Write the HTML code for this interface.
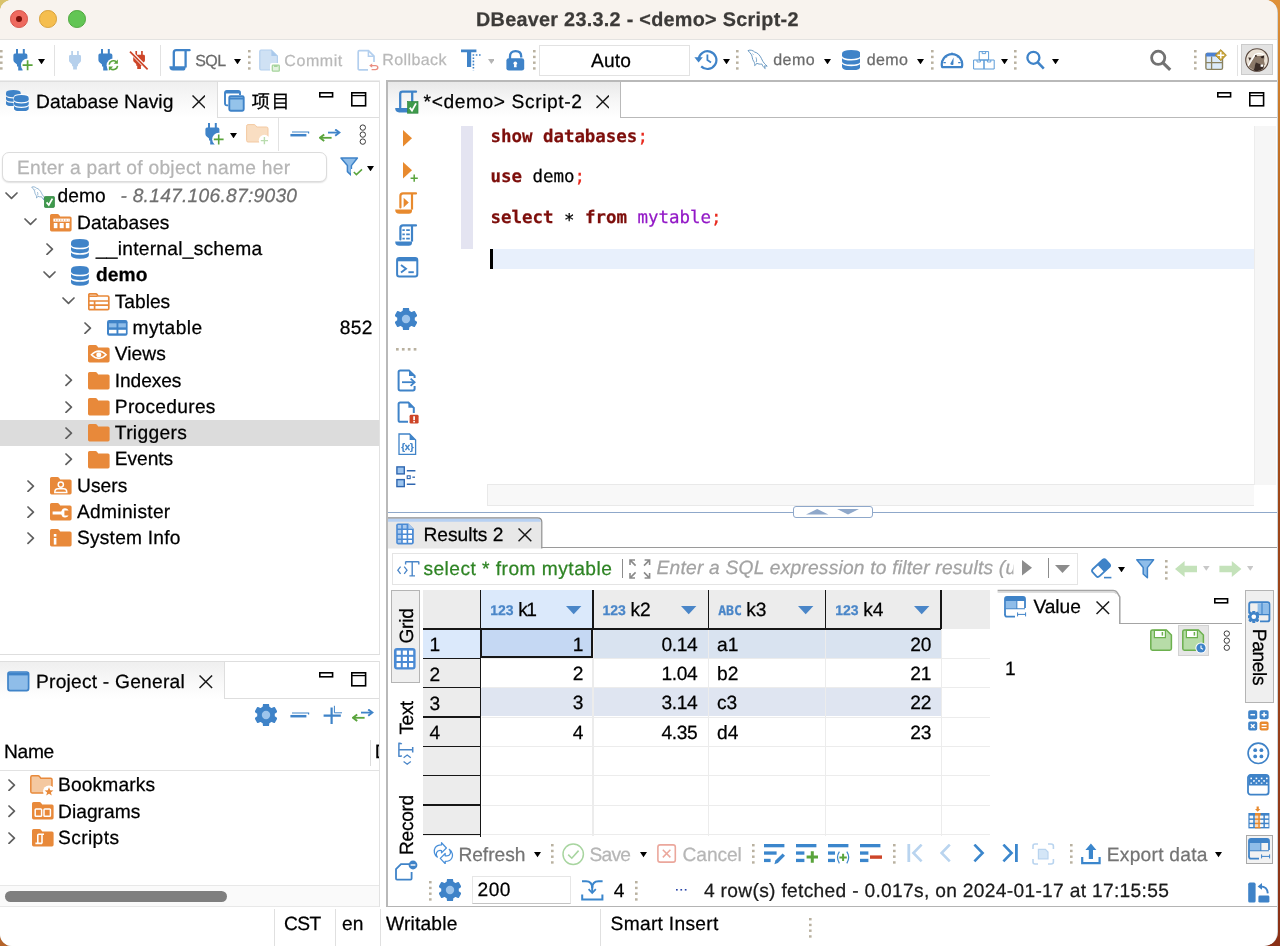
<!DOCTYPE html>
<html lang="en"><head><meta charset="utf-8"><title>DBeaver 23.3.2 - &lt;demo&gt; Script-2</title>
<style>
html,body{margin:0;padding:0;}
body{width:1280px;height:946px;overflow:hidden;position:relative;
 background:
  linear-gradient(180deg,#d9c26c 0,#d9c26c 40px,rgba(0,0,0,0) 41px) left top/40px 100% no-repeat,
  linear-gradient(180deg,rgba(0,0,0,0) 900px,#b5642a 901px) left top/40px 100% no-repeat,
  linear-gradient(180deg,#df9139 0%,#c97828 12%,#a04818 45%,#98401a 75%,#8a3016 100%);
 font-family:"Liberation Sans","Noto Sans CJK SC",sans-serif;}
#win{position:absolute;left:0;top:0;width:1277px;height:946px;background:#fff;border-radius:12px 12px 13px 12px;overflow:hidden;will-change:transform;}
.b{position:absolute;box-sizing:border-box;display:block;}
.t{position:absolute;white-space:pre;line-height:1em;color:#000;-webkit-text-stroke:0.25px;text-rendering:geometricPrecision;}
.m{font-family:"DejaVu Sans Mono","Liberation Mono",monospace;}
#winb{position:absolute;left:0;top:0;width:1278px;height:946px;background:#cfd5d8;border-radius:12px 13px 14px 12px;}

</style></head>
<body>
<div id="winb"></div>
<div id="win">
<div class="b" style="left:0px;top:0px;width:1277px;height:41px;background:#f8f3ee;border-bottom:2px solid #e4e3e1;"></div>
<div class="b" style="left:10.2px;top:10.1px;width:17.6px;height:17.6px;background:#ee6a5f;border-radius:50%;border:0.6px solid #d5544a;"></div>
<div class="b" style="left:39.2px;top:10.1px;width:17.6px;height:17.6px;background:#f5be4f;border-radius:50%;border:0.6px solid #d8a13b;"></div>
<div class="b" style="left:68.2px;top:10.1px;width:17.6px;height:17.6px;background:#62c554;border-radius:50%;border:0.6px solid #4fa73f;"></div>
<div class="b" style="left:16.1px;top:16px;width:5.8px;height:5.8px;background:#7a100a;border-radius:50%;"></div>
<span class="t" style="top:11px;font-size:19.8px;left:476.00px;letter-spacing:0.292px;color:#3c3a38;font-weight:700;">DBeaver 23.3.2 - &lt;demo&gt; Script-2</span>
<div class="b" style="left:0px;top:40px;width:1277px;height:40px;background:#fff;"></div>
<div class="b" style="left:0px;top:80px;width:380px;height:1px;background:#ededed;"></div>
<div class="b" style="left:0px;top:81px;width:380px;height:1px;background:#dedede;"></div>
<div class="b" style="left:379px;top:81px;width:1px;height:574px;background:#e2e2e2;"></div>
<div class="b" style="left:0px;top:654px;width:380px;height:1px;background:#dedede;"></div>
<div class="b" style="left:0px;top:661px;width:380px;height:1px;background:#dedede;"></div>
<div class="b" style="left:379px;top:661px;width:1px;height:246px;background:#e2e2e2;"></div>
<div class="b" style="left:386px;top:80px;width:891px;height:2px;background:#b9b9b9;"></div>
<div class="b" style="left:386px;top:80px;width:1.7px;height:827px;background:#b9b9b9;"></div>
<div class="b" style="left:386px;top:906.2px;width:891px;height:1.3px;background:#b4b4b4;"></div>
<div class="b" style="left:274px;top:909px;width:1px;height:37px;background:#e0e0e0;"></div>
<div class="b" style="left:335px;top:909px;width:1px;height:37px;background:#e0e0e0;"></div>
<div class="b" style="left:380px;top:909px;width:1px;height:37px;background:#e0e0e0;"></div>
<div class="b" style="left:600px;top:909px;width:1px;height:37px;background:#e0e0e0;"></div>
<svg class="b" style="left:0px;top:50.2px;" width="3" height="24" viewBox="0 0 3 24"><rect x="0" y="0.00" width="2.6" height="2.4" fill="#b9b1a0"/><rect x="0" y="5.75" width="2.6" height="2.4" fill="#b9b1a0"/><rect x="0" y="11.50" width="2.6" height="2.4" fill="#b9b1a0"/><rect x="0" y="17.25" width="2.6" height="2.4" fill="#b9b1a0"/></svg>
<svg class="b" style="left:12.6px;top:49px;" width="21" height="23" viewBox="0 0 21 23"><path d="M2.60 0.00H4.60V4.60H9.40V0H11.40V4.60H12.40Q14.00 4.60 14.00 6.20V11.00Q14.00 12.30 13.00 13.20L10.40 15.60V17.60H9.20V21.50H4.80V17.60H3.60V15.60L1.00 13.20Q0.00 12.30 0.00 11.00V6.20Q0.00 4.60 1.60 4.60H2.60Z" fill="#3f83c8" transform="translate(0.4,0)"/><circle cx="14.6" cy="16.2" r="6.6" fill="#fff"/><path d="M9.6 16.2H19.6M14.6 11.2V21.2" stroke="#5aa43c" stroke-width="1.7" fill="none"/></svg>
<svg class="b" style="left:38.3px;top:58.5px;" width="7" height="5.3" viewBox="0 0 7 5.3"><path d="M0 0H7L3.5 5.3Z" fill="#000"/></svg>
<div class="b" style="left:54px;top:45px;width:1px;height:31px;background:#e2e2e2;"></div>
<svg class="b" style="left:69px;top:50.6px;" width="13" height="19" viewBox="0 0 13 19"><path d="M2.24 0.00H3.96V3.96H8.08V0H9.80V3.96H10.66Q12.04 3.96 12.04 5.33V9.46Q12.04 10.58 11.18 11.35L8.94 13.42V15.14H7.91V18.49H4.13V15.14H3.10V13.42L0.86 11.35Q0.00 10.58 0.00 9.46V5.33Q0.00 3.96 1.38 3.96H2.24Z" fill="#b6d0ec"/></svg>
<svg class="b" style="left:97.6px;top:49px;" width="22" height="23" viewBox="0 0 22 23"><path d="M2.60 0.00H4.60V4.60H9.40V0H11.40V4.60H12.40Q14.00 4.60 14.00 6.20V11.00Q14.00 12.30 13.00 13.20L10.40 15.60V17.60H9.20V21.50H4.80V17.60H3.60V15.60L1.00 13.20Q0.00 12.30 0.00 11.00V6.20Q0.00 4.60 1.60 4.60H2.60Z" fill="#3f83c8" transform="translate(0.4,0)"/><circle cx="15.4" cy="16.2" r="6.8" fill="#fff"/><path d="M11.2 15.6A4.4 4.4 0 0 1 18.4 12.8" stroke="#5aa43c" stroke-width="1.6" fill="none"/><path d="M19.9 10.6V14.8H15.7Z" fill="#5aa43c"/><path d="M19.6 16.8A4.4 4.4 0 0 1 12.4 19.6" stroke="#5aa43c" stroke-width="1.6" fill="none"/><path d="M10.9 21.8V17.6H15.1Z" fill="#5aa43c"/></svg>
<svg class="b" style="left:128.5px;top:50px;" width="20" height="21" viewBox="0 0 20 21"><path d="M2.18 0.00H3.86V3.86H7.90V0H9.58V3.86H10.42Q11.76 3.86 11.76 5.21V9.24Q11.76 10.33 10.92 11.09L8.74 13.10V14.78H7.73V18.06H4.03V14.78H3.02V13.10L0.84 11.09Q0.00 10.33 0.00 9.24V5.21Q0.00 3.86 1.34 3.86H2.18Z" fill="#cd4528" transform="translate(4.2,1)"/><path d="M2.2 2.6L18 18.6" stroke="#fff" stroke-width="3.6"/><path d="M1 1.6L18.6 19.4" stroke="#cd4528" stroke-width="1.7"/></svg>
<div class="b" style="left:160px;top:45px;width:1px;height:31px;background:#e2e2e2;"></div>
<svg class="b" style="left:169.4px;top:49px;" width="22" height="22" viewBox="0 0 22 22"><path d="M20.6 1.2H7.2Q4.8 1.2 4.8 3.6V17.4" stroke="#3f83c8" stroke-width="2.3" fill="none" stroke-linecap="round"/><path d="M16.6 1.6V18.6" stroke="#3f83c8" stroke-width="2.3" fill="none"/><path d="M0.4 17.2H16.6V18.4Q16.6 21.6 13.4 21.6H4Q0.4 21.6 0.4 17.2Z" fill="#3f83c8"/></svg>
<span class="t" style="top:54px;font-size:16.0px;left:195.20px;letter-spacing:-0.505px;color:#6b6b6b;">SQL</span>
<svg class="b" style="left:234.4px;top:58.5px;" width="7" height="5.3" viewBox="0 0 7 5.3"><path d="M0 0H7L3.5 5.3Z" fill="#000"/></svg>
<svg class="b" style="left:247.5px;top:50.2px;" width="3" height="24" viewBox="0 0 3 24"><rect x="0" y="0.00" width="2.6" height="2.4" fill="#b9b1a0"/><rect x="0" y="5.75" width="2.6" height="2.4" fill="#b9b1a0"/><rect x="0" y="11.50" width="2.6" height="2.4" fill="#b9b1a0"/><rect x="0" y="17.25" width="2.6" height="2.4" fill="#b9b1a0"/></svg>
<svg class="b" style="left:258.6px;top:48.6px;" width="22" height="23" viewBox="0 0 22 23"><path d="M2 1H12.4L18.4 7V19.6Q18.4 21 17 21H2Q0.8 21 0.8 19.6V2.4Q0.8 1 2 1Z" fill="#cfe1f4" stroke="#b3cfee" stroke-width="1.2"/><path d="M12.4 1V7H18.4Z" fill="#a9c9ec"/><rect x="11" y="14" width="11" height="9" rx="2" fill="#fff"/><rect x="13.3" y="16.2" width="7" height="6" rx="0.8" fill="#e3f2df" stroke="#a6d49d" stroke-width="1.3"/><rect x="15" y="16" width="3.6" height="2" fill="#a6d49d"/></svg>
<span class="t" style="top:54px;font-size:16.0px;left:284.30px;letter-spacing:0.565px;color:#b9b9b9;">Commit</span>
<svg class="b" style="left:357.4px;top:48.8px;" width="22" height="23" viewBox="0 0 22 23"><path d="M2.4 1.6H11.4L17 7.2V19.4Q17 20.8 15.6 20.8H2.4Q1.2 20.8 1.2 19.4V3Q1.2 1.6 2.4 1.6Z" fill="#fff" stroke="#b3cfee" stroke-width="1.7"/><path d="M11.4 1.6V7.2H17" fill="none" stroke="#b3cfee" stroke-width="1.5"/><rect x="11" y="13" width="11" height="10" fill="#fff"/><path d="M13.4 16.6H18.4Q20.8 16.6 20.8 18.6Q20.8 20.6 18.4 20.6H14.6" fill="none" stroke="#ea8e82" stroke-width="1.4"/><path d="M12.2 16.6L15.2 14.4V18.8Z" fill="#ea8e82"/></svg>
<span class="t" style="top:53px;font-size:16.0px;left:382.30px;letter-spacing:0.393px;color:#b9b9b9;">Rollback</span>
<svg class="b" style="left:461px;top:49px;" width="22" height="22" viewBox="0 0 22 22"><path d="M0 0.4H15.4V3.2H0Z M6 3.2H10.2V18H6Z" fill="#3f83c8"/><path d="M11.6 6H21" stroke="#3f83c8" stroke-width="1.6" stroke-dasharray="1.6 1.6"/><path d="M12.4 8.4V21.4" stroke="#3f83c8" stroke-width="1.6" stroke-dasharray="1.6 1.6"/></svg>
<svg class="b" style="left:487.6px;top:58.8px;" width="6.8" height="5" viewBox="0 0 6.8 5"><path d="M0 0H6.8L3.4 5Z" fill="#b4b4b4"/></svg>
<svg class="b" style="left:505.6px;top:49px;" width="19" height="22" viewBox="0 0 19 22"><path d="M4 10V7.4Q4 2.2 9.6 2.2Q15.2 2.2 15.2 7.4V8.6" fill="none" stroke="#3f83c8" stroke-width="2.3"/><rect x="0.4" y="9.2" width="17.8" height="12.4" rx="2.4" fill="#3f83c8"/><circle cx="9.3" cy="14.2" r="1.8" fill="#fff"/><path d="M8.3 14.6H10.3L10.7 18.2H7.9Z" fill="#fff"/></svg>
<svg class="b" style="left:533px;top:50.2px;" width="3" height="24" viewBox="0 0 3 24"><rect x="0" y="0.00" width="2.6" height="2.4" fill="#b9b1a0"/><rect x="0" y="5.75" width="2.6" height="2.4" fill="#b9b1a0"/><rect x="0" y="11.50" width="2.6" height="2.4" fill="#b9b1a0"/><rect x="0" y="17.25" width="2.6" height="2.4" fill="#b9b1a0"/></svg>
<div class="b" style="left:539px;top:44.5px;width:151px;height:31.5px;background:#fff;border:1px solid #e2e2e2;"></div>
<span class="t" style="top:52px;font-size:19.2px;left:591.00px;letter-spacing:0.126px;">Auto</span>
<svg class="b" style="left:694px;top:49px;" width="24" height="22" viewBox="0 0 24 22"><path d="M4.6 10.6A8.9 8.9 0 1 1 7.2 17.4" fill="none" stroke="#3f83c8" stroke-width="2.2"/><path d="M0.4 8.2H8.8L4.6 13.6Z" fill="#3f83c8"/><path d="M13.4 5.6V11L17 13.4" fill="none" stroke="#3f83c8" stroke-width="1.8"/></svg>
<svg class="b" style="left:722.8px;top:58.5px;" width="7" height="5.3" viewBox="0 0 7 5.3"><path d="M0 0H7L3.5 5.3Z" fill="#000"/></svg>
<svg class="b" style="left:736.3px;top:50.2px;" width="3" height="24" viewBox="0 0 3 24"><rect x="0" y="0.00" width="2.6" height="2.4" fill="#b9b1a0"/><rect x="0" y="5.75" width="2.6" height="2.4" fill="#b9b1a0"/><rect x="0" y="11.50" width="2.6" height="2.4" fill="#b9b1a0"/><rect x="0" y="17.25" width="2.6" height="2.4" fill="#b9b1a0"/></svg>
<svg class="b" style="left:746.6px;top:49.4px;" width="21.0" height="21.0" viewBox="0 0 21.0 21.0"><g transform="scale(1.0)"><path d="M1 1.6C3.4 0.4 6.2 1.6 7.6 3C10.6 3.6 13 6.4 14.4 9.4C15.4 11.6 16.4 13.8 18.6 15.6L20.2 17.2L17.6 16.8L18.2 19.6C16.6 18.4 15.4 16.6 14.8 15C13 15.4 11.2 15 9.8 14.2C9.4 15.4 8.2 16.4 7.6 16.6C8 15 7.6 13.6 6.6 12.2C5 10 5.6 7.8 4.4 5.6C3.6 4.2 2 3 1 1.6Z" fill="#fff" stroke="#5b8fbb" stroke-width="0.9" stroke-linejoin="round"/><path d="M5.4 4.6L6.4 5.6M9 8.4C9.6 10 9.8 11.6 9.2 13" fill="none" stroke="#5b8fbb" stroke-width="0.8"/></g></svg>
<span class="t" style="top:53px;font-size:16.0px;left:773.20px;letter-spacing:0.494px;color:#6b6b6b;">demo</span>
<svg class="b" style="left:823.8px;top:58.5px;" width="7" height="5.3" viewBox="0 0 7 5.3"><path d="M0 0H7L3.5 5.3Z" fill="#000"/></svg>
<svg class="b" style="left:841.5px;top:49.5px;" width="18.9" height="20.9" viewBox="0 0 18.9 20.9"><g transform="scale(1.0)"><path d="M0 3.6Q0 0 9.2 0Q18.4 0 18.4 3.6V5.6Q18.4 9 9.2 9Q0 9 0 5.6Z" fill="#3f83c8"/><path d="M0 8.2Q2 10.6 9.2 10.6Q16.4 10.6 18.4 8.2V11.2Q18.4 14.6 9.2 14.6Q0 14.6 0 11.2Z" fill="#3f83c8"/><path d="M0 13.8Q2 16.2 9.2 16.2Q16.4 16.2 18.4 13.8V16.8Q18.4 20.4 9.2 20.4Q0 20.4 0 16.8Z" fill="#3f83c8"/></g></svg>
<span class="t" style="top:53px;font-size:16.0px;left:866.80px;letter-spacing:0.369px;color:#6b6b6b;">demo</span>
<svg class="b" style="left:917.2px;top:58.5px;" width="7" height="5.3" viewBox="0 0 7 5.3"><path d="M0 0H7L3.5 5.3Z" fill="#000"/></svg>
<svg class="b" style="left:930.6px;top:50.2px;" width="3" height="24" viewBox="0 0 3 24"><rect x="0" y="0.00" width="2.6" height="2.4" fill="#b9b1a0"/><rect x="0" y="5.75" width="2.6" height="2.4" fill="#b9b1a0"/><rect x="0" y="11.50" width="2.6" height="2.4" fill="#b9b1a0"/><rect x="0" y="17.25" width="2.6" height="2.4" fill="#b9b1a0"/></svg>
<svg class="b" style="left:940.2px;top:49.2px;" width="24" height="20" viewBox="0 0 24 20"><path d="M2.2 18.2A10.2 10.2 0 1 1 21.8 18.2Z" fill="none" stroke="#3f83c8" stroke-width="2.2" stroke-linejoin="round"/><path d="M12 3.6V6M5.4 6.8L7 8.4M18.6 6.8L17 8.4M3.4 13.6H5.8M20.6 13.6H18.2" stroke="#3f83c8" stroke-width="1.2"/><path d="M10.2 15L13.6 8.4L13.4 15.4Q12 16.6 10.2 15Z" fill="#3f83c8"/></svg>
<svg class="b" style="left:973.2px;top:51.2px;" width="22" height="19" viewBox="0 0 22 19"><path d="M6.2 0.6H15.6V9H6.2Z M0.6 9H11V18H0.6Z M11 9H21.2V18H11Z" fill="#fff" stroke="#5b9bd8" stroke-width="1"/><path d="M9.2 0.6V2.6H12.6V0.6M4 9V11H7.4V9M14.4 9V11H17.8V9" fill="none" stroke="#5b9bd8" stroke-width="0.9"/></svg>
<svg class="b" style="left:1000.8px;top:58.5px;" width="7" height="5.3" viewBox="0 0 7 5.3"><path d="M0 0H7L3.5 5.3Z" fill="#000"/></svg>
<svg class="b" style="left:1013.8px;top:50.2px;" width="3" height="24" viewBox="0 0 3 24"><rect x="0" y="0.00" width="2.6" height="2.4" fill="#b9b1a0"/><rect x="0" y="5.75" width="2.6" height="2.4" fill="#b9b1a0"/><rect x="0" y="11.50" width="2.6" height="2.4" fill="#b9b1a0"/><rect x="0" y="17.25" width="2.6" height="2.4" fill="#b9b1a0"/></svg>
<svg class="b" style="left:1025px;top:49.6px;" width="22" height="22" viewBox="0 0 22 22"><circle cx="8.4" cy="7.8" r="6" fill="none" stroke="#3f83c8" stroke-width="2.3"/><path d="M12.6 12.2L18.8 18.6" stroke="#3f83c8" stroke-width="2.6"/></svg>
<svg class="b" style="left:1051.6px;top:58.5px;" width="7" height="5.3" viewBox="0 0 7 5.3"><path d="M0 0H7L3.5 5.3Z" fill="#000"/></svg>
<svg class="b" style="left:1148.6px;top:48.8px;" width="25" height="24" viewBox="0 0 25 24"><circle cx="9.2" cy="8.8" r="6.6" fill="none" stroke="#727272" stroke-width="2.8"/><path d="M13.8 13.6L21.2 20.8" stroke="#727272" stroke-width="3.2"/></svg>
<svg class="b" style="left:1194px;top:50.3px;" width="3" height="24" viewBox="0 0 3 24"><rect x="0" y="0.00" width="2.6" height="2.4" fill="#b9b1a0"/><rect x="0" y="5.75" width="2.6" height="2.4" fill="#b9b1a0"/><rect x="0" y="11.50" width="2.6" height="2.4" fill="#b9b1a0"/><rect x="0" y="17.25" width="2.6" height="2.4" fill="#b9b1a0"/></svg>
<svg class="b" style="left:1205px;top:48.6px;" width="23" height="22" viewBox="0 0 23 22"><rect x="0.9" y="4.4" width="16.6" height="16" rx="1.4" fill="#dcebfa" stroke="#8a8260" stroke-width="1.4"/><path d="M1 5.2Q1 3.8 2.4 3.8H12V7.4H1Z" fill="#4d82d2"/><path d="M6.6 7.4V20.4M1 13.6H17.4" stroke="#8a8260" stroke-width="1.3"/><path d="M15.8 0.6L21.4 6.2L15.8 11.8L10.2 6.2Z" fill="#c9a437" stroke="#a8862a" stroke-width="0.8"/><path d="M15.8 2.8V9.6M12.4 6.2H19.2" stroke="#fff" stroke-width="1.5"/></svg>
<div class="b" style="left:1236.5px;top:44.5px;width:1px;height:31px;background:#e2e2e2;"></div>
<div class="b" style="left:1240.6px;top:44.3px;width:32px;height:31.2px;background:#e3e3e3;border:1px solid #cbcbcb;"></div>
<svg class="b" style="left:1244.6px;top:47.7px;" width="24" height="24" viewBox="0 0 24 24"><circle cx="12" cy="12" r="11.3" fill="#e9e0d4" stroke="#5b4a40" stroke-width="1.1"/><path d="M9.6 7.4Q13.6 4.4 19.4 8L19.6 6.4Q14 3 9 6.2Z" fill="#fff"/><path d="M3.4 18L10 7.8L11 7.2L12 8L16 8L19.2 7.6L19.4 10L19 13L19.9 16.6L18.6 17.9L10.6 14.6L9 22.2Q5.4 20.8 3.4 18Z" fill="#8b7969"/><path d="M10.6 14.3L19 17.8L18.4 20.6Q15.4 23 12 23.2Q10 23 8.8 22.2Z" fill="#3b2d27"/><circle cx="10.9" cy="7.9" r="0.85" fill="#2e221e"/><path d="M15.4 8.8L19.3 7.5L18.5 10.2L16.8 10.2Z" fill="#2e221e"/><rect x="15.6" y="16.5" width="2.5" height="2.3" fill="#fff"/><path d="M3.2 17.8L9.6 7.2" stroke="#fff" stroke-width="1.4"/><path d="M3.3 9.4L6.3 9.7L4.7 12.8Z" fill="#3b2d27"/></svg>
<div class="b" style="left:0px;top:82px;width:217px;height:36px;background:linear-gradient(180deg,#efefef 0%,#f7f7f7 45%,#fff 100%);"></div>
<div class="b" style="left:217px;top:82px;width:162px;height:36px;background:#fff;border-left:1px solid #dedede;border-bottom:1px solid #dedede;"></div>
<svg class="b" style="left:6.2px;top:89.6px;" width="15.2" height="16.8" viewBox="0 0 15.2 16.8"><g transform="scale(0.8)"><path d="M0 3.6Q0 0 9.2 0Q18.4 0 18.4 3.6V5.6Q18.4 9 9.2 9Q0 9 0 5.6Z" fill="#3f83c8"/><path d="M0 8.2Q2 10.6 9.2 10.6Q16.4 10.6 18.4 8.2V11.2Q18.4 14.6 9.2 14.6Q0 14.6 0 11.2Z" fill="#3f83c8"/><path d="M0 13.8Q2 16.2 9.2 16.2Q16.4 16.2 18.4 13.8V16.8Q18.4 20.4 9.2 20.4Q0 20.4 0 16.8Z" fill="#3f83c8"/></g></svg>
<svg class="b" style="left:12.6px;top:93.6px;" width="17" height="19" viewBox="0 0 17 19"><path d="M0.6 3Q0.6 0 8.4 0Q16.4 0 16.4 3V15Q16.4 18.4 8.4 18.4Q0.6 18.4 0.6 15Z" fill="#fff"/></svg>
<svg class="b" style="left:13.8px;top:94.6px;" width="15.2" height="16.8" viewBox="0 0 15.2 16.8"><g transform="scale(0.8)"><path d="M0 3.6Q0 0 9.2 0Q18.4 0 18.4 3.6V5.6Q18.4 9 9.2 9Q0 9 0 5.6Z" fill="#3f83c8"/><path d="M0 8.2Q2 10.6 9.2 10.6Q16.4 10.6 18.4 8.2V11.2Q18.4 14.6 9.2 14.6Q0 14.6 0 11.2Z" fill="#3f83c8"/><path d="M0 13.8Q2 16.2 9.2 16.2Q16.4 16.2 18.4 13.8V16.8Q18.4 20.4 9.2 20.4Q0 20.4 0 16.8Z" fill="#3f83c8"/></g></svg>
<span class="t" style="top:93px;font-size:19.2px;left:36.00px;letter-spacing:0.063px;">Database Navig</span>
<svg class="b" style="left:191.6px;top:95.2px;" width="13.6" height="13.6" viewBox="0 0 13.6 13.6"><path d="M0.5 0.5L13.1 13.1M13.1 0.5L0.5 13.1" stroke="#1a1a1a" stroke-width="1.5" fill="none"/></svg>
<svg class="b" style="left:223.6px;top:89.6px;" width="21" height="22" viewBox="0 0 21 22"><rect x="1" y="1" width="15" height="14.4" rx="1.8" fill="#fff" stroke="#3f83c8" stroke-width="1.9"/><path d="M1 2.2H16" stroke="#3f83c8" stroke-width="2.4"/><rect x="4.2" y="5" width="16" height="16.2" rx="1.8" fill="#fff"/><rect x="5.3" y="6.1" width="14.4" height="14.6" rx="1.4" fill="#94c3ea" stroke="#3f83c8" stroke-width="1.9"/><path d="M5.2 8.4H19.8" stroke="#3f83c8" stroke-width="2"/></svg>
<span class="t" style="top:93px;font-size:18.4px;left:251.60px;letter-spacing:1.2px;">项目</span>
<svg class="b" style="left:319px;top:92px;" width="15.4" height="6.6" viewBox="0 0 15.4 6.6"><rect x="0.8" y="0.8" width="12.8" height="3.9999999999999996" fill="#fff" stroke="#000" stroke-width="1.6"/></svg>
<svg class="b" style="left:350.6px;top:92px;" width="16.4" height="15.6" viewBox="0 0 16.4 15.6"><rect x="0.8" y="0.8" width="13.8" height="13.0" fill="#fff" stroke="#000" stroke-width="1.6"/><path d="M0.8 3.6H14.6" stroke="#000" stroke-width="1.3"/></svg>
<svg class="b" style="left:204.6px;top:123.4px;" width="21" height="23" viewBox="0 0 21 23"><path d="M2.60 0.00H4.60V4.60H9.40V0H11.40V4.60H12.40Q14.00 4.60 14.00 6.20V11.00Q14.00 12.30 13.00 13.20L10.40 15.60V17.60H9.20V21.50H4.80V17.60H3.60V15.60L1.00 13.20Q0.00 12.30 0.00 11.00V6.20Q0.00 4.60 1.60 4.60H2.60Z" fill="#3f83c8" transform="translate(0.4,0)"/><circle cx="13.6" cy="16.2" r="6.4" fill="#fff"/><path d="M8.8 16.4H18.6M13.7 11.4V21.4" stroke="#5aa43c" stroke-width="1.6" fill="none"/></svg>
<svg class="b" style="left:230px;top:133.2px;" width="7" height="5.3" viewBox="0 0 7 5.3"><path d="M0 0H7L3.5 5.3Z" fill="#000"/></svg>
<svg class="b" style="left:246px;top:124.4px;" width="24" height="21" viewBox="0 0 24 21"><path d="M2 0.6H8Q9 0.6 9.6 1.4L10.8 3H20.4Q22 3 22 4.6V16.4Q22 18 20.4 18H2Q0.6 18 0.6 16.4V2.2Q0.6 0.6 2 0.6Z" fill="#f9dec2" stroke="#f3c9a2" stroke-width="1"/><circle cx="18.4" cy="16.4" r="5.6" fill="#fff"/><path d="M14.8 16.6H22M18.4 13V20.2" stroke="#b9dcae" stroke-width="1.4"/></svg>
<div class="b" style="left:278px;top:118px;width:1px;height:33px;background:#e2e2e2;"></div>
<svg class="b" style="left:289.8px;top:130.6px;" width="20" height="7" viewBox="0 0 20 7"><path d="M2 1H18.6V2.6" stroke="#3f83c8" stroke-width="1.2" fill="none"/><path d="M0.4 4.2H16.4" stroke="#3f83c8" stroke-width="2.5"/></svg>
<svg class="b" style="left:319.2px;top:128.6px;" width="22" height="13" viewBox="0 0 22 13"><path d="M9 3.6H19" stroke="#3f83c8" stroke-width="1.8"/><path d="M16.2 0.4L20.4 3.6L16.2 6.8" fill="none" stroke="#3f83c8" stroke-width="1.9"/><path d="M2 8.8H12.6" stroke="#5aa43c" stroke-width="1.8"/><path d="M5.2 5.6L1 8.8L5.2 12" fill="none" stroke="#5aa43c" stroke-width="1.9"/></svg>
<svg class="b" style="left:359.4px;top:124.4px;" width="8" height="22" viewBox="0 0 8 22"><circle cx="3.8" cy="3.6" r="2.7" fill="#fff" stroke="#3a3a3a" stroke-width="1"/><circle cx="3.8" cy="10.6" r="2.7" fill="#fff" stroke="#3a3a3a" stroke-width="1"/><circle cx="3.8" cy="17.6" r="2.7" fill="#fff" stroke="#3a3a3a" stroke-width="1"/></svg>
<div class="b" style="left:1.5px;top:151.5px;width:325px;height:30px;background:#fff;border:1px solid #dcdcdc;border-radius:7px;box-shadow:0 1px 1.5px rgba(0,0,0,0.12);"></div>
<span class="t" style="top:159px;font-size:19.2px;left:17.00px;letter-spacing:0.284px;color:#b5b5b5;">Enter a part of object name her</span>
<svg class="b" style="left:339.6px;top:156.6px;" width="24" height="20" viewBox="0 0 24 20"><path d="M1 1H17.4L11.4 8.6V18.4L7.4 14.6V8.6Z" fill="#8fbde9" stroke="#3f83c8" stroke-width="1.5" stroke-linejoin="round"/><path d="M11 12H24V20H11Z" fill="#fff"/><path d="M13.8 15L16.4 17.6L22 12.4" fill="none" stroke="#5aa43c" stroke-width="1.5"/></svg>
<svg class="b" style="left:367.2px;top:165.6px;" width="7" height="5.3" viewBox="0 0 7 5.3"><path d="M0 0H7L3.5 5.3Z" fill="#000"/></svg>
<div class="b" style="left:0px;top:420.2px;width:379px;height:25.4px;background:#dcdcdc;"></div>
<svg class="b" style="left:4.9px;top:191.9px;" width="13" height="8.2" viewBox="0 0 13 8.2"><path d="M1 1L6.5 6.4L12 1" fill="none" stroke="#5f5f5f" stroke-width="1.7" stroke-linecap="round" stroke-linejoin="round"/></svg>
<svg class="b" style="left:31.2px;top:185.8px;" width="15.1" height="15.1" viewBox="0 0 15.1 15.1"><g transform="scale(0.72)"><path d="M1 1.6C3.4 0.4 6.2 1.6 7.6 3C10.6 3.6 13 6.4 14.4 9.4C15.4 11.6 16.4 13.8 18.6 15.6L20.2 17.2L17.6 16.8L18.2 19.6C16.6 18.4 15.4 16.6 14.8 15C13 15.4 11.2 15 9.8 14.2C9.4 15.4 8.2 16.4 7.6 16.6C8 15 7.6 13.6 6.6 12.2C5 10 5.6 7.8 4.4 5.6C3.6 4.2 2 3 1 1.6Z" fill="#fff" stroke="#5b8fbb" stroke-width="0.9" stroke-linejoin="round"/><path d="M5.4 4.6L6.4 5.6M9 8.4C9.6 10 9.8 11.6 9.2 13" fill="none" stroke="#5b8fbb" stroke-width="0.8"/></g></svg>
<svg class="b" style="left:43.6px;top:196.2px;" width="11" height="12" viewBox="0 0 11 12"><rect x="0.4" y="0.4" width="10" height="11" rx="1" fill="#3f9a4c" stroke="#2f8540" stroke-width="0.8"/><path d="M2.6 6.4L4.8 9L8.4 2.6" fill="none" stroke="#fff" stroke-width="1.7"/></svg>
<span class="t" style="top:187px;font-size:19.2px;left:57.60px;letter-spacing:0.043px;">demo</span>
<span class="t" style="top:187px;font-size:19.2px;left:120.40px;letter-spacing:0.269px;color:#6f6f6f;font-style:italic;">- 8.147.106.87:9030</span>
<svg class="b" style="left:23.799999999999997px;top:218.23px;" width="13" height="8.2" viewBox="0 0 13 8.2"><path d="M1 1L6.5 6.4L12 1" fill="none" stroke="#5f5f5f" stroke-width="1.7" stroke-linecap="round" stroke-linejoin="round"/></svg>
<span class="t" style="top:214px;font-size:19.2px;left:77.00px;letter-spacing:0.068px;">Databases</span>
<svg class="b" style="left:50.4px;top:213.52999999999997px;" width="22" height="18" viewBox="0 0 22 18"><path d="M1.6 0H7.4Q8.4 0 9 0.8L10.2 2.4H20Q21.6 2.4 21.6 4V15.8Q21.6 17.4 20 17.4H1.6Q0 17.4 0 15.8V1.6Q0 0 1.6 0Z" fill="#e8893a"/><rect x="3.4" y="4.6" width="16.4" height="3" fill="#fff"/><path d="M5 6.1H18.4" stroke="#e8893a" stroke-width="1" stroke-dasharray="1.2 1.4"/><rect x="3.8" y="9" width="3.6" height="5.2" fill="#fff"/><rect x="9.7" y="9" width="4" height="5.2" fill="#fff"/><rect x="15.8" y="9" width="3.6" height="5.2" fill="#fff"/></svg>
<svg class="b" style="left:45.699999999999996px;top:242.56px;" width="8.2" height="12.4" viewBox="0 0 8.2 12.4"><path d="M1 1L6.4 6.2L1 11.4" fill="none" stroke="#5f5f5f" stroke-width="1.7" stroke-linecap="round" stroke-linejoin="round"/></svg>
<span class="t" style="top:240px;font-size:19.2px;left:95.90px;letter-spacing:0.257px;">__internal_schema</span>
<svg class="b" style="left:70.5px;top:239.35999999999999px;" width="18.3" height="20.3" viewBox="0 0 18.3 20.3"><g transform="scale(0.97)"><path d="M0 3.6Q0 0 9.2 0Q18.4 0 18.4 3.6V5.6Q18.4 9 9.2 9Q0 9 0 5.6Z" fill="#3f83c8"/><path d="M0 8.2Q2 10.6 9.2 10.6Q16.4 10.6 18.4 8.2V11.2Q18.4 14.6 9.2 14.6Q0 14.6 0 11.2Z" fill="#3f83c8"/><path d="M0 13.8Q2 16.2 9.2 16.2Q16.4 16.2 18.4 13.8V16.8Q18.4 20.4 9.2 20.4Q0 20.4 0 16.8Z" fill="#3f83c8"/></g></svg>
<svg class="b" style="left:42.699999999999996px;top:270.89px;" width="13" height="8.2" viewBox="0 0 13 8.2"><path d="M1 1L6.5 6.4L12 1" fill="none" stroke="#5f5f5f" stroke-width="1.7" stroke-linecap="round" stroke-linejoin="round"/></svg>
<span class="t" style="top:266px;font-size:19.2px;left:95.90px;letter-spacing:0.098px;font-weight:700;">demo</span>
<svg class="b" style="left:70.5px;top:265.69px;" width="18.3" height="20.3" viewBox="0 0 18.3 20.3"><g transform="scale(0.97)"><path d="M0 3.6Q0 0 9.2 0Q18.4 0 18.4 3.6V5.6Q18.4 9 9.2 9Q0 9 0 5.6Z" fill="#3f83c8"/><path d="M0 8.2Q2 10.6 9.2 10.6Q16.4 10.6 18.4 8.2V11.2Q18.4 14.6 9.2 14.6Q0 14.6 0 11.2Z" fill="#3f83c8"/><path d="M0 13.8Q2 16.2 9.2 16.2Q16.4 16.2 18.4 13.8V16.8Q18.4 20.4 9.2 20.4Q0 20.4 0 16.8Z" fill="#3f83c8"/></g></svg>
<svg class="b" style="left:61.59999999999999px;top:297.21999999999997px;" width="13" height="8.2" viewBox="0 0 13 8.2"><path d="M1 1L6.5 6.4L12 1" fill="none" stroke="#5f5f5f" stroke-width="1.7" stroke-linecap="round" stroke-linejoin="round"/></svg>
<span class="t" style="top:293px;font-size:19.2px;left:114.80px;letter-spacing:-0.017px;">Tables</span>
<svg class="b" style="left:88.19999999999999px;top:292.52px;" width="22" height="18" viewBox="0 0 22 18"><path d="M2 0.8H7.4Q8.4 0.8 9 1.6L10 3H19.6Q20.8 3 20.8 4.2V15.4Q20.8 16.6 19.6 16.6H2Q0.8 16.6 0.8 15.4V2Q0.8 0.8 2 0.8Z" fill="#fff" stroke="#e8893a" stroke-width="1.7"/><path d="M1 3.2H9.6" stroke="#e8893a" stroke-width="1.6"/><path d="M1 8H20.6M1 12.2H20.6M6.6 8V16.4" stroke="#e8893a" stroke-width="1.7"/></svg>
<svg class="b" style="left:83.5px;top:321.54999999999995px;" width="8.2" height="12.4" viewBox="0 0 8.2 12.4"><path d="M1 1L6.4 6.2L1 11.4" fill="none" stroke="#5f5f5f" stroke-width="1.7" stroke-linecap="round" stroke-linejoin="round"/></svg>
<span class="t" style="top:319px;font-size:19.2px;left:132.50px;letter-spacing:0.396px;">mytable</span>
<svg class="b" style="left:107.3px;top:319.74999999999994px;" width="21" height="16.4" viewBox="0 0 21 16.4"><rect x="0" y="0" width="20.6" height="15.8" rx="2.2" fill="#3f83c8"/><rect x="2" y="3.3" width="7.5" height="4.1" fill="#8fbde9"/><rect x="11.4" y="3.3" width="7.5" height="4.1" fill="#8fbde9"/><rect x="2" y="9.8" width="7.5" height="3.6" fill="#fff"/><rect x="11.4" y="9.8" width="7.5" height="3.6" fill="#fff"/></svg>
<span class="t" style="top:319px;font-size:19.2px;right:904.28px;letter-spacing:0.322px;">852</span>
<span class="t" style="top:345px;font-size:19.2px;left:114.80px;letter-spacing:0.026px;">Views</span>
<svg class="b" style="left:88.19999999999999px;top:345.17999999999995px;" width="22" height="18" viewBox="0 0 22 18"><path d="M1.6 0H7.4Q8.4 0 9 0.8L10.2 2.4H20Q21.6 2.4 21.6 4V15.8Q21.6 17.4 20 17.4H1.6Q0 17.4 0 15.8V1.6Q0 0 1.6 0Z" fill="#e8893a"/><path d="M3.4 9.8Q10.8 2.4 18.2 9.8Q10.8 17 3.4 9.8Z" fill="none" stroke="#fff" stroke-width="1.5"/><circle cx="10.8" cy="9.8" r="2.5" fill="#fff"/></svg>
<svg class="b" style="left:64.6px;top:374.21px;" width="8.2" height="12.4" viewBox="0 0 8.2 12.4"><path d="M1 1L6.4 6.2L1 11.4" fill="none" stroke="#5f5f5f" stroke-width="1.7" stroke-linecap="round" stroke-linejoin="round"/></svg>
<span class="t" style="top:372px;font-size:19.2px;left:114.80px;letter-spacing:-0.092px;">Indexes</span>
<svg class="b" style="left:88.19999999999999px;top:371.51px;" width="22" height="18" viewBox="0 0 22 18"><path d="M1.6 0H7.4Q8.4 0 9 0.8L10.2 2.4H20Q21.6 2.4 21.6 4V15.8Q21.6 17.4 20 17.4H1.6Q0 17.4 0 15.8V1.6Q0 0 1.6 0Z" fill="#e8893a"/></svg>
<svg class="b" style="left:64.6px;top:400.53999999999996px;" width="8.2" height="12.4" viewBox="0 0 8.2 12.4"><path d="M1 1L6.4 6.2L1 11.4" fill="none" stroke="#5f5f5f" stroke-width="1.7" stroke-linecap="round" stroke-linejoin="round"/></svg>
<span class="t" style="top:398px;font-size:19.2px;left:114.80px;letter-spacing:0.281px;">Procedures</span>
<svg class="b" style="left:88.19999999999999px;top:397.84px;" width="22" height="18" viewBox="0 0 22 18"><path d="M1.6 0H7.4Q8.4 0 9 0.8L10.2 2.4H20Q21.6 2.4 21.6 4V15.8Q21.6 17.4 20 17.4H1.6Q0 17.4 0 15.8V1.6Q0 0 1.6 0Z" fill="#e8893a"/></svg>
<svg class="b" style="left:64.6px;top:426.86999999999995px;" width="8.2" height="12.4" viewBox="0 0 8.2 12.4"><path d="M1 1L6.4 6.2L1 11.4" fill="none" stroke="#5f5f5f" stroke-width="1.7" stroke-linecap="round" stroke-linejoin="round"/></svg>
<span class="t" style="top:424px;font-size:19.2px;left:114.80px;letter-spacing:0.337px;">Triggers</span>
<svg class="b" style="left:88.19999999999999px;top:424.16999999999996px;" width="22" height="18" viewBox="0 0 22 18"><path d="M1.6 0H7.4Q8.4 0 9 0.8L10.2 2.4H20Q21.6 2.4 21.6 4V15.8Q21.6 17.4 20 17.4H1.6Q0 17.4 0 15.8V1.6Q0 0 1.6 0Z" fill="#e8893a"/></svg>
<svg class="b" style="left:64.6px;top:453.19999999999993px;" width="8.2" height="12.4" viewBox="0 0 8.2 12.4"><path d="M1 1L6.4 6.2L1 11.4" fill="none" stroke="#5f5f5f" stroke-width="1.7" stroke-linecap="round" stroke-linejoin="round"/></svg>
<span class="t" style="top:450px;font-size:19.2px;left:114.80px;letter-spacing:-0.050px;">Events</span>
<svg class="b" style="left:88.19999999999999px;top:450.49999999999994px;" width="22" height="18" viewBox="0 0 22 18"><path d="M1.6 0H7.4Q8.4 0 9 0.8L10.2 2.4H20Q21.6 2.4 21.6 4V15.8Q21.6 17.4 20 17.4H1.6Q0 17.4 0 15.8V1.6Q0 0 1.6 0Z" fill="#e8893a"/></svg>
<svg class="b" style="left:26.799999999999997px;top:479.53px;" width="8.2" height="12.4" viewBox="0 0 8.2 12.4"><path d="M1 1L6.4 6.2L1 11.4" fill="none" stroke="#5f5f5f" stroke-width="1.7" stroke-linecap="round" stroke-linejoin="round"/></svg>
<span class="t" style="top:477px;font-size:19.2px;left:77.00px;letter-spacing:0.052px;">Users</span>
<svg class="b" style="left:50.4px;top:476.83px;" width="22" height="18" viewBox="0 0 22 18"><path d="M1.6 0H7.4Q8.4 0 9 0.8L10.2 2.4H20Q21.6 2.4 21.6 4V15.8Q21.6 17.4 20 17.4H1.6Q0 17.4 0 15.8V1.6Q0 0 1.6 0Z" fill="#e8893a"/><circle cx="10.8" cy="7.6" r="2.6" fill="none" stroke="#fff" stroke-width="1.5"/><path d="M4.8 15.4Q4.8 11.8 8 11.8H13.6Q16.8 11.8 16.8 15.4Z" fill="none" stroke="#fff" stroke-width="1.5"/></svg>
<svg class="b" style="left:26.799999999999997px;top:505.85999999999996px;" width="8.2" height="12.4" viewBox="0 0 8.2 12.4"><path d="M1 1L6.4 6.2L1 11.4" fill="none" stroke="#5f5f5f" stroke-width="1.7" stroke-linecap="round" stroke-linejoin="round"/></svg>
<span class="t" style="top:503px;font-size:19.2px;left:77.00px;letter-spacing:0.291px;">Administer</span>
<svg class="b" style="left:50.4px;top:503.15999999999997px;" width="22" height="18" viewBox="0 0 22 18"><path d="M1.6 0H7.4Q8.4 0 9 0.8L10.2 2.4H20Q21.6 2.4 21.6 4V15.8Q21.6 17.4 20 17.4H1.6Q0 17.4 0 15.8V1.6Q0 0 1.6 0Z" fill="#e8893a"/><path d="M2.6 8.4H11.2A4 4 0 0 1 18.6 7.4H14.4V12.4H18.6A4 4 0 0 1 11.2 11.6H2.6Z" fill="#fff"/></svg>
<svg class="b" style="left:26.799999999999997px;top:532.1899999999999px;" width="8.2" height="12.4" viewBox="0 0 8.2 12.4"><path d="M1 1L6.4 6.2L1 11.4" fill="none" stroke="#5f5f5f" stroke-width="1.7" stroke-linecap="round" stroke-linejoin="round"/></svg>
<span class="t" style="top:529px;font-size:19.2px;left:77.00px;letter-spacing:0.203px;">System Info</span>
<svg class="b" style="left:50.4px;top:529.49px;" width="22" height="18" viewBox="0 0 22 18"><path d="M1.6 0H7.4Q8.4 0 9 0.8L10.2 2.4H20Q21.6 2.4 21.6 4V15.8Q21.6 17.4 20 17.4H1.6Q0 17.4 0 15.8V1.6Q0 0 1.6 0Z" fill="#e8893a"/><rect x="3.8" y="5" width="2.6" height="2.6" fill="#fff"/><rect x="3.8" y="9" width="2.6" height="6.6" fill="#fff"/></svg>
<div class="b" style="left:0px;top:662px;width:224px;height:36.5px;background:linear-gradient(180deg,#efefef 0%,#f7f7f7 45%,#fff 100%);"></div>
<div class="b" style="left:224px;top:662px;width:155px;height:36.5px;background:#fff;border-left:1px solid #dedede;border-bottom:1px solid #dedede;"></div>
<svg class="b" style="left:6.6px;top:670.6px;" width="23" height="21" viewBox="0 0 23 21"><rect x="1" y="1" width="20.6" height="18.6" rx="2" fill="#8fbde9" stroke="#3f83c8" stroke-width="1.7"/><path d="M1 3.2H21.6" stroke="#3f83c8" stroke-width="2.4"/></svg>
<span class="t" style="top:673px;font-size:19.2px;left:36.00px;letter-spacing:0.228px;">Project - General</span>
<svg class="b" style="left:199.2px;top:675.4px;" width="13.6" height="13.6" viewBox="0 0 13.6 13.6"><path d="M0.5 0.5L13.1 13.1M13.1 0.5L0.5 13.1" stroke="#1a1a1a" stroke-width="1.5" fill="none"/></svg>
<svg class="b" style="left:319px;top:672.4px;" width="15.4" height="6.6" viewBox="0 0 15.4 6.6"><rect x="0.8" y="0.8" width="12.8" height="3.9999999999999996" fill="#fff" stroke="#000" stroke-width="1.6"/></svg>
<svg class="b" style="left:350.6px;top:672.4px;" width="16.4" height="15.6" viewBox="0 0 16.4 15.6"><rect x="0.8" y="0.8" width="13.8" height="13.0" fill="#fff" stroke="#000" stroke-width="1.6"/><path d="M0.8 3.6H14.6" stroke="#000" stroke-width="1.3"/></svg>
<svg class="b" style="left:255px;top:704.2px;" width="22" height="22" viewBox="0 0 22 22"><path d="M8.81 0.22L13.19 0.22L13.64 3.30L16.35 4.87L19.24 3.72L21.43 7.50L18.99 9.43L18.99 12.57L21.43 14.50L19.24 18.28L16.35 17.13L13.64 18.70L13.19 21.78L8.81 21.78L8.36 18.70L5.65 17.13L2.76 18.28L0.57 14.50L3.01 12.57L3.01 9.43L0.57 7.50L2.76 3.72L5.65 4.87L8.36 3.30Z" fill="#3f83c8" stroke="#3f83c8" stroke-width="1.6" stroke-linejoin="round"/><circle cx="11.0" cy="11.0" r="4.18" fill="#9cc4ec"/></svg>
<svg class="b" style="left:290px;top:712px;" width="20" height="7" viewBox="0 0 20 7"><path d="M2 1H18.6V2.6" stroke="#3f83c8" stroke-width="1.2" fill="none"/><path d="M0.4 4.2H16.4" stroke="#3f83c8" stroke-width="2.5"/></svg>
<svg class="b" style="left:321.6px;top:703.6px;" width="22" height="23" viewBox="0 0 22 23"><path d="M1.6 11.6H18.8M9.6 3.4V20" stroke="#3f83c8" stroke-width="2.2" fill="none"/><path d="M12.4 1.8V8.8H20" stroke="#3f83c8" stroke-width="1" fill="none"/></svg>
<svg class="b" style="left:352.4px;top:708.6px;" width="22" height="13" viewBox="0 0 22 13"><path d="M9 3.6H19" stroke="#3f83c8" stroke-width="1.8"/><path d="M16.2 0.4L20.4 3.6L16.2 6.8" fill="none" stroke="#3f83c8" stroke-width="1.9"/><path d="M2 8.8H12.6" stroke="#5aa43c" stroke-width="1.8"/><path d="M5.2 5.6L1 8.8L5.2 12" fill="none" stroke="#5aa43c" stroke-width="1.9"/></svg>
<span class="t" style="top:743px;font-size:19.2px;left:4.00px;letter-spacing:-0.304px;">Name</span>
<div class="b" style="left:370px;top:740px;width:1px;height:26px;background:#dcdcdc;"></div>
<div class="b" style="left:372px;top:738px;width:7px;height:30px;overflow:hidden;"><span class="t" style="left:2.8px;top:5px;font-size:19.2px;">D</span></div>
<div class="b" style="left:0px;top:770px;width:379px;height:1px;background:#e2e2e2;"></div>
<svg class="b" style="left:8.2px;top:779.0999999999999px;" width="8.2" height="12.4" viewBox="0 0 8.2 12.4"><path d="M1 1L6.4 6.2L1 11.4" fill="none" stroke="#5f5f5f" stroke-width="1.7" stroke-linecap="round" stroke-linejoin="round"/></svg>
<svg class="b" style="left:30.4px;top:774.9px;" width="26" height="22" viewBox="0 0 26 22"><path d="M2 0.8H8Q9 0.8 9.6 1.6L10.8 3.2H20.6Q22 3.2 22 4.6V16.6Q22 18 20.6 18H2Q0.8 18 0.8 16.6V2.2Q0.8 0.8 2 0.8Z" fill="#f4c8a0" stroke="#e8893a" stroke-width="1.5"/><circle cx="19" cy="16.4" r="6" fill="#fff"/><path d="M19 12.2L20.2 15.2L23.4 15.4L20.9 17.4L21.8 20.6L19 18.8L16.2 20.6L17.1 17.4L14.6 15.4L17.8 15.2Z" fill="#e8893a"/></svg>
<span class="t" style="top:776px;font-size:19.2px;left:58.00px;letter-spacing:0.152px;">Bookmarks</span>
<svg class="b" style="left:8.2px;top:805.43px;" width="8.2" height="12.4" viewBox="0 0 8.2 12.4"><path d="M1 1L6.4 6.2L1 11.4" fill="none" stroke="#5f5f5f" stroke-width="1.7" stroke-linecap="round" stroke-linejoin="round"/></svg>
<svg class="b" style="left:31.6px;top:802.23px;" width="22" height="18" viewBox="0 0 22 18"><path d="M1.6 0H7.4Q8.4 0 9 0.8L10.2 2.4H20Q21.6 2.4 21.6 4V15.8Q21.6 17.4 20 17.4H1.6Q0 17.4 0 15.8V1.6Q0 0 1.6 0Z" fill="#e8893a"/><rect x="3.2" y="7" width="6.4" height="7.2" rx="0.8" fill="none" stroke="#fff" stroke-width="1.5"/><rect x="12" y="7" width="6.4" height="7.2" rx="0.8" fill="none" stroke="#fff" stroke-width="1.5"/></svg>
<span class="t" style="top:803px;font-size:19.2px;left:58.00px;letter-spacing:0.031px;">Diagrams</span>
<svg class="b" style="left:8.2px;top:831.7599999999999px;" width="8.2" height="12.4" viewBox="0 0 8.2 12.4"><path d="M1 1L6.4 6.2L1 11.4" fill="none" stroke="#5f5f5f" stroke-width="1.7" stroke-linecap="round" stroke-linejoin="round"/></svg>
<svg class="b" style="left:31.6px;top:828.56px;" width="22" height="18" viewBox="0 0 22 18"><path d="M1.6 0H7.4Q8.4 0 9 0.8L10.2 2.4H20Q21.6 2.4 21.6 4V15.8Q21.6 17.4 20 17.4H1.6Q0 17.4 0 15.8V1.6Q0 0 1.6 0Z" fill="#e8893a"/><path d="M12 5.2H6.8Q5.8 5.2 5.8 6.2V13.6M10 5.6V14.6M3.4 14.4H10" fill="none" stroke="#fff" stroke-width="1.6"/></svg>
<span class="t" style="top:829px;font-size:19.2px;left:58.00px;letter-spacing:0.389px;">Scripts</span>
<div class="b" style="left:0px;top:885px;width:379px;height:22px;background:#fafafa;border-top:1px solid #e8e8e8;border-bottom:1px solid #e8e8e8;"></div>
<div class="b" style="left:4.6px;top:890.8px;width:222px;height:10.8px;background:#7f7f7f;border-radius:6px;"></div>
<span class="t" style="top:915px;font-size:19.2px;left:284.00px;letter-spacing:-0.600px;">CST</span>
<span class="t" style="top:915px;font-size:19.2px;left:342.00px;letter-spacing:0.022px;">en</span>
<span class="t" style="top:915px;font-size:19.2px;left:386.00px;letter-spacing:0.191px;">Writable</span>
<span class="t" style="top:915px;font-size:19.2px;left:610.60px;letter-spacing:0.287px;">Smart Insert</span>
<svg class="b" style="left:808.8px;top:917.6px;" width="3" height="24" viewBox="0 0 3 24"><rect x="0" y="0.00" width="2.6" height="2.4" fill="#b9b1a0"/><rect x="0" y="5.75" width="2.6" height="2.4" fill="#b9b1a0"/><rect x="0" y="11.50" width="2.6" height="2.4" fill="#b9b1a0"/><rect x="0" y="17.25" width="2.6" height="2.4" fill="#b9b1a0"/></svg>
<div class="b" style="left:388px;top:82px;width:232px;height:36px;background:linear-gradient(180deg,#e9e9e9 0%,#f5f5f5 45%,#fff 100%);"></div>
<div class="b" style="left:620px;top:82px;width:657px;height:36px;background:#fff;border-left:1.5px solid #b9b9b9;border-bottom:1.5px solid #b9b9b9;"></div>
<svg class="b" style="left:394.6px;top:90px;" width="24" height="24" viewBox="0 0 24 24"><path d="M21 1.7H7.6Q5.2 1.7 5.2 4V17.6" stroke="#3f83c8" stroke-width="2.3" fill="none" stroke-linecap="round"/><path d="M17.2 2V18" stroke="#3f83c8" stroke-width="2.3" fill="none"/><path d="M0.2 18H17V19Q17 22.4 13.8 22.4H4.2Q0.2 22.4 0.2 18Z" fill="#3f83c8"/><rect x="12.6" y="11.6" width="10.4" height="11.6" fill="#3f9a4c" stroke="#2f8540" stroke-width="0.7"/><path d="M14.8 17.6L17 20.6L21 13.4" fill="none" stroke="#fff" stroke-width="1.8"/></svg>
<span class="t" style="top:93px;font-size:19.2px;left:423.60px;letter-spacing:0.599px;">*&lt;demo&gt; Script-2</span>
<svg class="b" style="left:595.6px;top:95.4px;" width="13.6" height="13.6" viewBox="0 0 13.6 13.6"><path d="M0.5 0.5L13.1 13.1M13.1 0.5L0.5 13.1" stroke="#1a1a1a" stroke-width="1.5" fill="none"/></svg>
<svg class="b" style="left:1217px;top:92.2px;" width="15.4" height="6.6" viewBox="0 0 15.4 6.6"><rect x="0.8" y="0.8" width="12.8" height="3.9999999999999996" fill="#fff" stroke="#000" stroke-width="1.6"/></svg>
<svg class="b" style="left:1248.6px;top:92.2px;" width="16.4" height="15.6" viewBox="0 0 16.4 15.6"><rect x="0.8" y="0.8" width="13.8" height="13.0" fill="#fff" stroke="#000" stroke-width="1.6"/><path d="M0.8 3.6H14.6" stroke="#000" stroke-width="1.3"/></svg>
<svg class="b" style="left:402.8px;top:130px;" width="10" height="17" viewBox="0 0 10 17"><path d="M0 0L9 8.2L0 16.4Z" fill="#e88a2e"/></svg>
<svg class="b" style="left:402.8px;top:162px;" width="16" height="21" viewBox="0 0 16 21"><path d="M0 0L9 8.2L0 16.4Z" fill="#e88a2e"/><path d="M7.6 16.2H14.8M11.2 12.6V19.8" stroke="#5aa43c" stroke-width="1.5"/></svg>
<svg class="b" style="left:395.4px;top:192px;" width="23" height="23" viewBox="0 0 23 23"><path d="M21 1.4H8Q5.4 1.4 5.4 4V15.4" stroke="#e88a2e" stroke-width="2.2" fill="none" stroke-linecap="round"/><path d="M17 1.6V17.6" stroke="#e88a2e" stroke-width="2.2" fill="none"/><path d="M0.2 17.4H17V18.6Q17 21.8 13.8 21.8H4.4Q0.2 21.8 0.2 17.4Z" fill="#e88a2e"/><path d="M8.6 5.8L13.8 10.6L8.6 15.4Z" fill="#e88a2e"/></svg>
<svg class="b" style="left:395.4px;top:224.4px;" width="23" height="23" viewBox="0 0 23 23"><path d="M21 1.4H8Q5.4 1.4 5.4 4V15.4" stroke="#3f83c8" stroke-width="2.2" fill="none" stroke-linecap="round"/><path d="M17 1.6V17.6" stroke="#3f83c8" stroke-width="2.2" fill="none"/><path d="M0.2 17.4H17V18.6Q17 21.8 13.8 21.8H4.4Q0.2 21.8 0.2 17.4Z" fill="#3f83c8"/><path d="M7.4 6.2H9.8M11.2 6.2H14.8" stroke="#3f83c8" stroke-width="1.7"/><path d="M7.4 10.4H9.8M11.2 10.4H14.8" stroke="#3f83c8" stroke-width="1.7"/><path d="M7.4 14.6H9.8M11.2 14.6H14.8" stroke="#3f83c8" stroke-width="1.7"/></svg>
<svg class="b" style="left:395.6px;top:257px;" width="23" height="21" viewBox="0 0 23 21"><rect x="1.1" y="1.1" width="20.2" height="18.4" rx="2.2" fill="#fff" stroke="#3f83c8" stroke-width="2"/><path d="M1 3H21.4" stroke="#3f83c8" stroke-width="2.6"/><path d="M5 8L10 11.8L5 15.6" fill="none" stroke="#3f83c8" stroke-width="1.9"/><path d="M12.4 15.2H17.8" stroke="#3f83c8" stroke-width="1.9"/></svg>
<svg class="b" style="left:395.4px;top:307.8px;" width="22" height="22" viewBox="0 0 22 22"><path d="M8.81 0.22L13.19 0.22L13.64 3.30L16.35 4.87L19.24 3.72L21.43 7.50L18.99 9.43L18.99 12.57L21.43 14.50L19.24 18.28L16.35 17.13L13.64 18.70L13.19 21.78L8.81 21.78L8.36 18.70L5.65 17.13L2.76 18.28L0.57 14.50L3.01 12.57L3.01 9.43L0.57 7.50L2.76 3.72L5.65 4.87L8.36 3.30Z" fill="#3f83c8" stroke="#3f83c8" stroke-width="1.6" stroke-linejoin="round"/><circle cx="11.0" cy="11.0" r="4.18" fill="#9cc4ec"/></svg>
<svg class="b" style="left:396.2px;top:348px;" width="22" height="4" viewBox="0 0 22 4"><rect x="0.0" y="0" width="2.7" height="2.6" fill="#b9b1a0"/><rect x="5.9" y="0" width="2.7" height="2.6" fill="#b9b1a0"/><rect x="11.8" y="0" width="2.7" height="2.6" fill="#b9b1a0"/><rect x="17.7" y="0" width="2.7" height="2.6" fill="#b9b1a0"/></svg>
<svg class="b" style="left:396.6px;top:368.6px;" width="20" height="23" viewBox="0 0 20 23"><path d="M17.6 9V7L12 1.4H3.2Q1.6 1.4 1.6 3V19.8Q1.6 21.4 3.2 21.4H16Q17.6 21.4 17.6 19.8V17" fill="none" stroke="#3f83c8" stroke-width="2"/><path d="M12 1.4V7H17.6Z" fill="#3f83c8"/><path d="M5 13.2H17" stroke="#3f83c8" stroke-width="1.8"/><path d="M13.6 9.6L17.6 13.2L13.6 16.8" fill="none" stroke="#3f83c8" stroke-width="1.8"/></svg>
<svg class="b" style="left:396.6px;top:400.8px;" width="23" height="23" viewBox="0 0 23 23"><path d="M16.8 12V6.8L11.4 1.4H3.2Q1.6 1.4 1.6 3V19.2Q1.6 20.8 3.2 20.8H11" fill="none" stroke="#3f83c8" stroke-width="2"/><path d="M11.4 1.4V6.8H16.8Z" fill="#3f83c8"/><rect x="12.6" y="13.8" width="9" height="8.8" rx="1.4" fill="#cd4528"/><path d="M17.1 15.2V19" stroke="#fff" stroke-width="1.7"/><rect x="16.25" y="19.8" width="1.7" height="1.6" fill="#fff"/></svg>
<svg class="b" style="left:397.6px;top:433.4px;" width="19" height="23" viewBox="0 0 19 23"><path d="M1 1H11.6L17.6 7V21.4H1Z" fill="#fff" stroke="#3f83c8" stroke-width="1.3"/><path d="M11.6 1V7H17.6Z" fill="#3f83c8"/></svg>
<span class="t" style="top:443px;font-size:9.6px;left:401.20px;letter-spacing:-0.137px;color:#3f83c8;font-weight:700;">{x}</span>
<svg class="b" style="left:396px;top:466.4px;" width="21" height="22" viewBox="0 0 21 22"><rect x="0.9" y="0.9" width="7.4" height="7" fill="#9cc4ee" stroke="#2f66b0" stroke-width="1.4"/><rect x="0.9" y="13.6" width="7.4" height="7" fill="#9cc4ee" stroke="#2f66b0" stroke-width="1.4"/><path d="M10.8 4.8H19.4M10.8 18.2H19.4" stroke="#2f66b0" stroke-width="1.5"/><rect x="11.2" y="9.8" width="3" height="2.8" fill="#fff" stroke="#2f66b0" stroke-width="1.1"/><path d="M16.4 11.2H19" stroke="#2f66b0" stroke-width="1.3"/></svg>
<div class="b" style="left:461px;top:125.8px;width:11.8px;height:122.8px;background:#e4e4f1;"></div>
<div class="b" style="left:490px;top:248.6px;width:763.6px;height:20.6px;background:#e8f0fc;"></div>
<div class="b" style="left:490px;top:248.8px;width:2.6px;height:19.8px;background:#000;"></div>
<div class="b" style="left:1253.6px;top:125.6px;width:22.4px;height:359px;background:#f6f6f6;border-left:1px solid #ececec;"></div>
<span class="t m" style="top:129px;font-size:17.45px;left:490.40px;letter-spacing:0.000px;color:#7d0e0b;font-weight:700;">show databases</span>
<span class="t m" style="top:129px;font-size:17.45px;left:637.48px;letter-spacing:0.000px;color:#e8281c;">;</span>
<span class="t m" style="top:169px;font-size:17.45px;left:490.40px;letter-spacing:0.000px;color:#7d0e0b;font-weight:700;">use </span>
<span class="t m" style="top:169px;font-size:17.45px;left:532.42px;letter-spacing:0.000px;">demo</span>
<span class="t m" style="top:169px;font-size:17.45px;left:574.45px;letter-spacing:0.000px;color:#e8281c;">;</span>
<span class="t m" style="top:210px;font-size:17.45px;left:490.40px;letter-spacing:0.000px;color:#7d0e0b;font-weight:700;">select </span>
<span class="t m" style="top:213px;font-size:17.45px;left:563.94px;letter-spacing:0.000px;">* </span>
<span class="t m" style="top:210px;font-size:17.45px;left:584.95px;letter-spacing:0.000px;color:#7d0e0b;font-weight:700;">from </span>
<span class="t m" style="top:210px;font-size:17.45px;left:637.48px;letter-spacing:0.000px;color:#9217c6;">mytable</span>
<span class="t m" style="top:210px;font-size:17.45px;left:711.02px;letter-spacing:0.000px;color:#e8281c;">;</span>
<div class="b" style="left:487.4px;top:484.4px;width:766.4px;height:21.4px;background:#f8f8f8;border:1px solid #e9e9e9;border-right:none;"></div>
<div class="b" style="left:388px;top:512px;width:889px;height:1px;background:#8fa8ca;"></div>
<div class="b" style="left:793px;top:506.2px;width:80px;height:11.4px;background:#fff;border:1px solid #8fa8ca;border-radius:3px;"></div>
<svg class="b" style="left:805.6px;top:509px;" width="23" height="6" viewBox="0 0 23 6"><path d="M0 5.4L11.2 0L22.4 5.4Z" fill="#8fa8ca"/></svg>
<svg class="b" style="left:836.8px;top:509px;" width="23" height="6" viewBox="0 0 23 6"><path d="M0 0H22L11 5.4Z" fill="#8fa8ca"/></svg>
<svg class="b" style="left:388px;top:516.6px;" width="157" height="32" viewBox="0 0 157 32"><path d="M0 1H149.6Q153.6 1 153.6 5V31.4H0Z" fill="#e8e8e8"/><path d="M0 1.6H150Q152.4 1.8 153 4.8H0Z" fill="#b7d1f3"/><path d="M0 0.8H149.6Q153.8 0.8 153.8 5V31.4" fill="none" stroke="#8f8f8f" stroke-width="1.2"/></svg>
<div class="b" style="left:541.4px;top:547px;width:735.6px;height:1.4px;background:#9a9a9a;"></div>
<svg class="b" style="left:395.6px;top:523px;" width="19" height="22" viewBox="0 0 19 22"><path d="M2 0.4H12.4L17.8 5.8V19.6Q17.8 21.4 16 21.4H2Q0.2 21.4 0.2 19.6V2.2Q0.2 0.4 2 0.4Z" fill="#4a8ad4"/><path d="M12.4 0.4L17.8 5.8H12.4Z" fill="#a9c9ee"/><path d="M1.8 2H5.2V5.4H1.8ZM1.8 7H5.2V10.4H1.8ZM1.8 12H5.2V15.4H1.8ZM1.8 17H5.2V19.8H1.8ZM6.8 2H10.6V5.4H6.8Z" fill="#a9c9ee"/><path d="M6.8 7H10.6V10.4H6.8ZM6.8 12H10.6V15.4H6.8ZM6.8 17H10.6V19.8H6.8ZM12.2 7H16V10.4H12.2ZM12.2 12H16V15.4H12.2ZM12.2 17H16V19.8H12.2Z" fill="#fff"/></svg>
<span class="t" style="top:526px;font-size:19.2px;left:423.40px;letter-spacing:-0.004px;">Results 2</span>
<svg class="b" style="left:518px;top:527.8px;" width="13.8" height="13.8" viewBox="0 0 13.8 13.8"><path d="M0.5 0.5L13.3 13.3M13.3 0.5L0.5 13.3" stroke="#1a1a1a" stroke-width="1.5" fill="none"/></svg>
<div class="b" style="left:392.4px;top:553px;width:685.4px;height:31.6px;background:#fff;border:1px solid #e4e4e4;"></div>
<svg class="b" style="left:396.6px;top:561px;" width="23" height="16" viewBox="0 0 23 16"><path d="M3.6 5.6L0.8 9.2L3.6 12.8M7.2 5.6L10 9.2L7.2 12.8" fill="none" stroke="#4a86c8" stroke-width="1.3"/><path d="M8.6 0.7H21.8M8.6 0.4V3.6M21.8 0.4V3.6M15.2 0.7V14.6M12.4 14.9H18" fill="none" stroke="#4a86c8" stroke-width="1.4"/></svg>
<span class="t" style="top:560px;font-size:19.2px;left:423.40px;letter-spacing:0.464px;color:#2e8424;">select * from mytable</span>
<div class="b" style="left:621.6px;top:559px;width:1.3px;height:19px;background:#8c8c8c;"></div>
<svg class="b" style="left:629px;top:559px;" width="22" height="21" viewBox="0 0 22 21"><path d="M1 6V1H6M1.4 1.4L6.6 6.6" fill="none" stroke="#8a8a8a" stroke-width="1.6"/><path d="M15.6 1H20.6V6M20.2 1.4L15 6.6" fill="none" stroke="#8a8a8a" stroke-width="1.6"/><path d="M1 14V19H6M1.4 18.6L6.6 13.4" fill="none" stroke="#8a8a8a" stroke-width="1.6"/><path d="M15.6 19H20.6V14M20.2 18.6L15 13.4" fill="none" stroke="#8a8a8a" stroke-width="1.6"/></svg>
<span class="t" style="top:559px;font-size:19.2px;left:656.60px;letter-spacing:0.215px;color:#a3a3a3;font-style:italic;clip-path:inset(-3px 3px -3px 0);">Enter a SQL expression to filter results (u</span>
<svg class="b" style="left:1022.4px;top:560px;" width="11" height="16" viewBox="0 0 11 16"><path d="M0 0L10 7.8L0 15.6Z" fill="#8c8c8c"/></svg>
<div class="b" style="left:1047.6px;top:558px;width:1.3px;height:19.6px;background:#8c8c8c;"></div>
<svg class="b" style="left:1055px;top:564.6px;" width="16" height="9" viewBox="0 0 16 9"><path d="M0 0H15L7.5 8Z" fill="#8c8c8c"/></svg>
<svg class="b" style="left:1090.4px;top:557.8px;" width="23" height="21" viewBox="0 0 23 21"><g transform="rotate(-43 11 10)"><rect x="2" y="5.2" width="18" height="9.8" rx="2.4" fill="#fff" stroke="#3f83c8" stroke-width="1.8"/><path d="M10.6 5.2H17.6Q20 5.2 20 7.6V12.6Q20 15 17.6 15H10.6Z" fill="#3f83c8"/></g><path d="M14 19.6H21.4" stroke="#3f83c8" stroke-width="1.6"/></svg>
<svg class="b" style="left:1118px;top:566.8px;" width="7" height="5.3" viewBox="0 0 7 5.3"><path d="M0 0H7L3.5 5.3Z" fill="#000"/></svg>
<svg class="b" style="left:1135.8px;top:558.8px;" width="19" height="20" viewBox="0 0 19 20"><path d="M0.8 0.8H17.6L11.4 8.6V18.8L7.2 15V8.6Z" fill="#8fbde9" stroke="#3f83c8" stroke-width="1.5" stroke-linejoin="round"/></svg>
<svg class="b" style="left:1164.6px;top:560px;" width="3" height="24" viewBox="0 0 3 24"><rect x="0" y="0.00" width="2.6" height="2.4" fill="#b9b1a0"/><rect x="0" y="5.75" width="2.6" height="2.4" fill="#b9b1a0"/><rect x="0" y="11.50" width="2.6" height="2.4" fill="#b9b1a0"/><rect x="0" y="17.25" width="2.6" height="2.4" fill="#b9b1a0"/></svg>
<svg class="b" style="left:1175.4px;top:561px;" width="23" height="17" viewBox="0 0 23 17"><path d="M0 8L9.6 0V4.8H22V11.2H9.6V16Z" fill="#c4e2ba"/></svg>
<svg class="b" style="left:1203px;top:566.4px;" width="6.6" height="4.8" viewBox="0 0 6.6 4.8"><path d="M0 0H6.6L3.3 4.8Z" fill="#c8c8c8"/></svg>
<svg class="b" style="left:1219px;top:561px;" width="23" height="17" viewBox="0 0 23 17"><path d="M22.4 8L12.8 0V4.8H0.4V11.2H12.8V16Z" fill="#c4e2ba"/></svg>
<svg class="b" style="left:1246.8px;top:566.4px;" width="6.6" height="4.8" viewBox="0 0 6.6 4.8"><path d="M0 0H6.6L3.3 4.8Z" fill="#c8c8c8"/></svg>
<div class="b" style="left:391px;top:589.6px;width:29px;height:93.4px;background:#efefef;border:1px solid #b4b4b4;"></div>
<span class="t" style="left:408.4px;top:626.2px;font-size:19.2px;letter-spacing:-0.318px;transform:translate(-50%,-50%) rotate(-90deg);">Grid</span>
<svg class="b" style="left:394.4px;top:648px;" width="22" height="22" viewBox="0 0 22 22"><rect x="0" y="0" width="21.6" height="21.6" rx="3" fill="#4a8ad4"/><rect x="2.6" y="2.6" width="4.2" height="4.2" fill="#fff"/><rect x="2.6" y="8.8" width="4.2" height="4.2" fill="#fff"/><rect x="2.6" y="15.0" width="4.2" height="4.2" fill="#fff"/><rect x="8.8" y="2.6" width="4.2" height="4.2" fill="#fff"/><rect x="8.8" y="8.8" width="4.2" height="4.2" fill="#fff"/><rect x="8.8" y="15.0" width="4.2" height="4.2" fill="#fff"/><rect x="15.0" y="2.6" width="4.2" height="4.2" fill="#fff"/><rect x="15.0" y="8.8" width="4.2" height="4.2" fill="#fff"/><rect x="15.0" y="15.0" width="4.2" height="4.2" fill="#fff"/></svg>
<span class="t" style="left:408.2px;top:718.4px;font-size:19.2px;letter-spacing:-0.553px;transform:translate(-50%,-50%) rotate(-90deg);">Text</span>
<svg class="b" style="left:397.6px;top:741.6px;" width="16" height="23" viewBox="0 0 16 23"><g transform="translate(0,23) rotate(-90)"><path d="M3.6 5.6L0.8 9.2L3.6 12.8M7.2 5.6L10 9.2L7.2 12.8" fill="none" stroke="#4a86c8" stroke-width="1.3"/><path d="M8.6 0.9H21.8M8.7 0.4Q8.4 2.6 9.4 3.8M21.7 0.4Q22 2.6 21 3.8M15.2 0.7V14.4M12.4 14.7H18" fill="none" stroke="#4a86c8" stroke-width="1.5"/></g></svg>
<span class="t" style="left:407.6px;top:825.0px;font-size:19.2px;letter-spacing:-0.316px;transform:translate(-50%,-50%) rotate(-90deg);">Record</span>
<svg class="b" style="left:393.6px;top:860.4px;" width="24" height="21" viewBox="0 0 24 21"><path d="M15 4.2H7L2 9.2V18.6Q2 19.6 3 19.6H16.6Q17.6 19.6 17.6 18.6V12" fill="none" stroke="#3f83c8" stroke-width="1.8"/><circle cx="19" cy="5" r="4.4" fill="#3f83c8"/><path d="M16.6 5H21.4" stroke="#fff" stroke-width="1.4"/></svg>
<div class="b" style="left:423.2px;top:589.6px;width:567.2px;height:39.60000000000002px;background:#ececec;"></div>
<div class="b" style="left:480.6px;top:589.6px;width:112.39999999999998px;height:39.60000000000002px;background:#dbe9fb;"></div>
<div class="b" style="left:423.2px;top:629.2px;width:57.400000000000034px;height:206.79999999999995px;background:#ececec;"></div>
<div class="b" style="left:423.2px;top:629.2px;width:57.400000000000034px;height:29.33px;background:#dbe9fb;"></div>
<div class="b" style="left:480.6px;top:629.6px;width:460.6px;height:27.93px;background:#d9e3f0;"></div>
<div class="b" style="left:480.6px;top:688.46px;width:460.6px;height:27.729999999999997px;background:#dfe5f1;"></div>
<div class="b" style="left:481.6px;top:657.9300000000001px;width:508.79999999999995px;height:1.2px;background:#ececec;"></div>
<div class="b" style="left:481.6px;top:687.26px;width:508.79999999999995px;height:1.2px;background:#ececec;"></div>
<div class="b" style="left:481.6px;top:716.59px;width:508.79999999999995px;height:1.2px;background:#ececec;"></div>
<div class="b" style="left:481.6px;top:745.92px;width:508.79999999999995px;height:1.2px;background:#ececec;"></div>
<div class="b" style="left:481.6px;top:775.25px;width:508.79999999999995px;height:1.2px;background:#ececec;"></div>
<div class="b" style="left:481.6px;top:804.58px;width:508.79999999999995px;height:1.2px;background:#ececec;"></div>
<div class="b" style="left:481.6px;top:833.91px;width:508.79999999999995px;height:1.2px;background:#ececec;"></div>
<div class="b" style="left:592.4px;top:629.2px;width:1.3px;height:207.19999999999993px;background:#ececec;"></div>
<div class="b" style="left:708.0px;top:629.2px;width:1.3px;height:207.19999999999993px;background:#ececec;"></div>
<div class="b" style="left:825.0px;top:629.2px;width:1.3px;height:207.19999999999993px;background:#ececec;"></div>
<div class="b" style="left:940.6px;top:629.2px;width:1.3px;height:207.19999999999993px;background:#ececec;"></div>
<div class="b" style="left:423.2px;top:657.5300000000001px;width:57.400000000000034px;height:1.6px;background:#161616;"></div>
<div class="b" style="left:423.2px;top:686.86px;width:57.400000000000034px;height:1.6px;background:#161616;"></div>
<div class="b" style="left:423.2px;top:716.19px;width:57.400000000000034px;height:1.6px;background:#161616;"></div>
<div class="b" style="left:423.2px;top:745.52px;width:57.400000000000034px;height:1.6px;background:#161616;"></div>
<div class="b" style="left:423.2px;top:774.85px;width:57.400000000000034px;height:1.6px;background:#161616;"></div>
<div class="b" style="left:423.2px;top:804.1800000000001px;width:57.400000000000034px;height:1.6px;background:#161616;"></div>
<div class="b" style="left:423.2px;top:833.51px;width:57.400000000000034px;height:1.6px;background:#161616;"></div>
<div class="b" style="left:479.6px;top:589.6px;width:1.8px;height:247.0px;background:#161616;"></div>
<div class="b" style="left:423.2px;top:628.2px;width:518.0px;height:1.7px;background:#161616;"></div>
<div class="b" style="left:592px;top:589.6px;width:1.7px;height:39.60000000000002px;background:#161616;"></div>
<div class="b" style="left:707.6px;top:589.6px;width:1.7px;height:39.60000000000002px;background:#161616;"></div>
<div class="b" style="left:824.6px;top:589.6px;width:1.7px;height:39.60000000000002px;background:#161616;"></div>
<div class="b" style="left:940.2px;top:589.6px;width:1.7px;height:39.60000000000002px;background:#161616;"></div>
<div class="b" style="left:480.20000000000005px;top:628.4000000000001px;width:112.79999999999998px;height:29.529999999999998px;background:#c5d8f3;border:2px solid #161616;"></div>
<span class="t" style="top:603px;font-size:14px;left:490.20px;letter-spacing:-0.053px;color:#4a86c8;font-weight:700;">123</span>
<span class="t" style="top:601px;font-size:19.2px;left:518.20px;letter-spacing:-1.439px;">k1</span>
<svg class="b" style="left:565.7px;top:606px;" width="16" height="9" viewBox="0 0 16 9"><path d="M0 0H15.4L7.7 8.2Z" fill="#4a86c8"/></svg>
<span class="t" style="top:603px;font-size:14px;left:602.60px;letter-spacing:-0.053px;color:#4a86c8;font-weight:700;">123</span>
<span class="t" style="top:601px;font-size:19.2px;left:630.60px;letter-spacing:-0.139px;">k2</span>
<svg class="b" style="left:681.3000000000001px;top:606px;" width="16" height="9" viewBox="0 0 16 9"><path d="M0 0H15.4L7.7 8.2Z" fill="#4a86c8"/></svg>
<span class="t m" style="top:605px;font-size:13.2px;left:718.20px;letter-spacing:-0.080px;color:#4a86c8;font-weight:700;">ABC</span>
<span class="t" style="top:601px;font-size:19.2px;left:746.20px;letter-spacing:0.061px;">k3</span>
<svg class="b" style="left:798.3000000000001px;top:606px;" width="16" height="9" viewBox="0 0 16 9"><path d="M0 0H15.4L7.7 8.2Z" fill="#4a86c8"/></svg>
<span class="t" style="top:603px;font-size:14px;left:835.20px;letter-spacing:-0.053px;color:#4a86c8;font-weight:700;">123</span>
<span class="t" style="top:601px;font-size:19.2px;left:863.20px;letter-spacing:0.061px;">k4</span>
<svg class="b" style="left:913.9000000000001px;top:606px;" width="16" height="9" viewBox="0 0 16 9"><path d="M0 0H15.4L7.7 8.2Z" fill="#4a86c8"/></svg>
<span class="t" style="top:636px;font-size:19.2px;left:429.40px;">1</span>
<span class="t" style="top:636px;font-size:19.2px;right:693.60px;">1</span>
<span class="t" style="top:636px;font-size:19.2px;right:579.77px;letter-spacing:-0.375px;">0.14</span>
<span class="t" style="top:636px;font-size:19.2px;left:717.00px;">a1</span>
<span class="t" style="top:636px;font-size:19.2px;right:345.90px;letter-spacing:-0.300px;">20</span>
<span class="t" style="top:666px;font-size:19.2px;left:429.40px;">2</span>
<span class="t" style="top:665px;font-size:19.2px;right:693.60px;">2</span>
<span class="t" style="top:665px;font-size:19.2px;right:579.77px;letter-spacing:-0.375px;">1.04</span>
<span class="t" style="top:665px;font-size:19.2px;left:717.00px;">b2</span>
<span class="t" style="top:665px;font-size:19.2px;right:345.90px;letter-spacing:-0.300px;">21</span>
<span class="t" style="top:695px;font-size:19.2px;left:429.40px;">3</span>
<span class="t" style="top:694px;font-size:19.2px;right:693.60px;">3</span>
<span class="t" style="top:694px;font-size:19.2px;right:579.77px;letter-spacing:-0.375px;">3.14</span>
<span class="t" style="top:694px;font-size:19.2px;left:717.00px;">c3</span>
<span class="t" style="top:694px;font-size:19.2px;right:345.90px;letter-spacing:-0.300px;">22</span>
<span class="t" style="top:724px;font-size:19.2px;left:429.40px;">4</span>
<span class="t" style="top:724px;font-size:19.2px;right:693.60px;">4</span>
<span class="t" style="top:724px;font-size:19.2px;right:579.77px;letter-spacing:-0.375px;">4.35</span>
<span class="t" style="top:724px;font-size:19.2px;left:717.00px;">d4</span>
<span class="t" style="top:724px;font-size:19.2px;right:345.90px;letter-spacing:-0.300px;">23</span>
<svg class="b" style="left:997px;top:588.6px;" width="126" height="36" viewBox="0 0 126 36"><path d="M0.6 1.4H116Q119.2 1.4 120.4 4L122.8 8V35" fill="none" stroke="#a4a4a4" stroke-width="1.5"/><path d="M0.6 3H116.6Q118.6 3.2 119.6 5" fill="none" stroke="#d4d4d4" stroke-width="1.4"/></svg>
<div class="b" style="left:1119.4px;top:622.6px;width:123px;height:1.5px;background:#a4a4a4;"></div>
<svg class="b" style="left:1004px;top:595.6px;" width="23" height="22" viewBox="0 0 23 22"><path d="M1 19V3Q1 1 3 1H19Q21 1 21 3V12" fill="none" stroke="#3f83c8" stroke-width="1.8"/><path d="M1 3.4H21" stroke="#3f83c8" stroke-width="3.2"/><rect x="2" y="5" width="10.6" height="7.6" fill="#8fbde9"/><path d="M1.6 12.8H21M12.8 5V12.8" stroke="#3f83c8" stroke-width="1.1"/><path d="M1 18.4Q1 20.6 3 20.6H11" fill="none" stroke="#3f83c8" stroke-width="1.8"/><path d="M13.6 18.4H21.6M13.6 16.4V20.4M21.6 16.4V20.4" stroke="#3f83c8" stroke-width="1"/></svg>
<span class="t" style="top:598px;font-size:19.2px;left:1033.40px;letter-spacing:-0.056px;">Value</span>
<svg class="b" style="left:1096px;top:601.2px;" width="13.6" height="13.6" viewBox="0 0 13.6 13.6"><path d="M0.5 0.5L13.1 13.1M13.1 0.5L0.5 13.1" stroke="#1a1a1a" stroke-width="1.5" fill="none"/></svg>
<svg class="b" style="left:1214.2px;top:598px;" width="15.4" height="6.6" viewBox="0 0 15.4 6.6"><rect x="0.8" y="0.8" width="12.8" height="3.9999999999999996" fill="#fff" stroke="#000" stroke-width="1.6"/></svg>
<svg class="b" style="left:1150.4px;top:629px;" width="23" height="23" viewBox="0 0 23 23"><path d="M2.4 1H16.4L21.4 6V19.6Q21.4 21.2 19.8 21.2H2.4Q0.8 21.2 0.8 19.6V2.6Q0.8 1 2.4 1Z" fill="#b7dca8" stroke="#6cb04e" stroke-width="1.5"/><path d="M4.4 1.4H15.4V8.6H4.4Z" fill="#fff" stroke="#6cb04e" stroke-width="1.2"/><path d="M12.4 3V6.6" stroke="#6cb04e" stroke-width="1.5"/></svg>
<div class="b" style="left:1178px;top:624.8px;width:31.4px;height:31.4px;background:#e6e6e6;border:1px solid #d2d2d2;"></div>
<svg class="b" style="left:1182.2px;top:629px;" width="23" height="23" viewBox="0 0 23 23"><path d="M2.4 1H16.4L21.4 6V19.6Q21.4 21.2 19.8 21.2H2.4Q0.8 21.2 0.8 19.6V2.6Q0.8 1 2.4 1Z" fill="#b7dca8" stroke="#6cb04e" stroke-width="1.5"/><path d="M4.4 1.4H15.4V8.6H4.4Z" fill="#fff" stroke="#6cb04e" stroke-width="1.2"/><path d="M12.4 3V6.6" stroke="#6cb04e" stroke-width="1.5"/></svg>
<svg class="b" style="left:1195px;top:642px;" width="12" height="12" viewBox="0 0 12 12"><circle cx="6" cy="6" r="5.6" fill="#fff"/><circle cx="6" cy="6" r="4.6" fill="#3f83c8"/><path d="M6 3.4V6.2L8 7.2" fill="none" stroke="#fff" stroke-width="1.1"/></svg>
<svg class="b" style="left:1222.6px;top:630.2px;" width="8" height="22.1" viewBox="0 0 8 22.1"><circle cx="3.8" cy="3.6" r="2.7" fill="#fff" stroke="#3a3a3a" stroke-width="1"/><circle cx="3.8" cy="10.65" r="2.7" fill="#fff" stroke="#3a3a3a" stroke-width="1"/><circle cx="3.8" cy="17.7" r="2.7" fill="#fff" stroke="#3a3a3a" stroke-width="1"/></svg>
<span class="t" style="top:660px;font-size:19.2px;left:1005.00px;">1</span>
<div class="b" style="left:1245.2px;top:589.6px;width:28.6px;height:113.2px;background:#efefef;border:1px solid #b4b4b4;"></div>
<svg class="b" style="left:1248.4px;top:601.4px;" width="23" height="23" viewBox="0 0 23 23"><path d="M6 1.2H19.4Q21.4 1.2 21.4 3.2V18.4Q21.4 20.4 19.4 20.4H12" fill="none" stroke="#3f83c8" stroke-width="1.9"/><path d="M1.2 12V3.2Q1.2 1.2 3.2 1.2H6" fill="none" stroke="#3f83c8" stroke-width="1.9"/><rect x="9.6" y="2.4" width="10.8" height="11" fill="#8fbde9"/><path d="M14 2V14M9.6 13.6H21" stroke="#3f83c8" stroke-width="1.1"/></svg>
<svg class="b" style="left:1247.6px;top:611.4px;" width="11.6" height="11.6" viewBox="0 0 11.6 11.6"><path d="M11.53 4.93L11.53 6.67L9.84 6.87L9.41 7.89L10.47 9.24L9.24 10.47L7.89 9.41L6.87 9.84L6.67 11.53L4.93 11.53L4.73 9.84L3.71 9.41L2.36 10.47L1.13 9.24L2.19 7.89L1.76 6.87L0.07 6.67L0.07 4.93L1.76 4.73L2.19 3.71L1.13 2.36L2.36 1.13L3.71 2.19L4.73 1.76L4.93 0.07L6.67 0.07L6.87 1.76L7.89 2.19L9.24 1.13L10.47 2.36L9.41 3.71L9.84 4.73Z" fill="#3f83c8" stroke="#3f83c8" stroke-width="1.2" stroke-linejoin="round"/><circle cx="5.8" cy="5.8" r="2.32" fill="#fff"/></svg>
<span class="t" style="left:1258.2px;top:657.0px;font-size:19.2px;letter-spacing:-0.384px;transform:translate(-50%,-50%) rotate(90deg);">Panels</span>
<svg class="b" style="left:1247.6px;top:710.4px;" width="22" height="22" viewBox="0 0 22 22"><rect x="0.2" y="0.2" width="9" height="9" rx="1.8" fill="#3f83c8"/><path d="M2.4 4.7H7" stroke="#fff" stroke-width="1.5"/><rect x="11.6" y="0.2" width="9" height="9" rx="1.8" fill="#3f83c8"/><path d="M13.6 4.7H18.6M16.1 2.2V7.2" stroke="#fff" stroke-width="1.5"/><rect x="0.2" y="11.6" width="9" height="9" rx="1.8" fill="#3f83c8"/><path d="M2.8 14.2L6.6 18M6.6 14.2L2.8 18" stroke="#fff" stroke-width="1.4"/><rect x="11.6" y="11.6" width="9" height="9" rx="1.8" fill="#e88a2e"/><path d="M13.6 14.8H18.6M13.6 17.6H18.6" stroke="#fff" stroke-width="1.4"/></svg>
<svg class="b" style="left:1246.6px;top:742.2px;" width="23" height="23" viewBox="0 0 23 23"><circle cx="11.3" cy="11.3" r="10.2" fill="#fff" stroke="#3f83c8" stroke-width="1.7"/><circle cx="8.2" cy="8.2" r="1.9" fill="#3f83c8"/><circle cx="8.2" cy="14.4" r="1.9" fill="#3f83c8"/><circle cx="14.4" cy="8.2" r="1.9" fill="#3f83c8"/><circle cx="14.4" cy="14.4" r="1.9" fill="#3f83c8"/></svg>
<svg class="b" style="left:1246.8px;top:774.4px;" width="23" height="22" viewBox="0 0 23 22"><rect x="1" y="1" width="20.6" height="19.6" rx="2.6" fill="#fff" stroke="#3f83c8" stroke-width="1.8"/><path d="M1.6 2H21V11.6H1.6Z" fill="#3f83c8"/><rect x="3.4" y="3.6" width="1.6" height="1.6" fill="#fff"/><rect x="3.4" y="8.4" width="1.6" height="1.6" fill="#cfe3f7"/><rect x="6.0" y="6.0" width="1.6" height="1.6" fill="#fff"/><rect x="6.0" y="6.0" width="1.6" height="1.6" fill="#cfe3f7"/><rect x="8.6" y="3.6" width="1.6" height="1.6" fill="#fff"/><rect x="8.6" y="8.4" width="1.6" height="1.6" fill="#cfe3f7"/><rect x="11.2" y="6.0" width="1.6" height="1.6" fill="#fff"/><rect x="11.2" y="6.0" width="1.6" height="1.6" fill="#cfe3f7"/><rect x="13.8" y="3.6" width="1.6" height="1.6" fill="#fff"/><rect x="13.8" y="8.4" width="1.6" height="1.6" fill="#cfe3f7"/><rect x="16.4" y="6.0" width="1.6" height="1.6" fill="#fff"/><rect x="16.4" y="6.0" width="1.6" height="1.6" fill="#cfe3f7"/><rect x="19.0" y="3.6" width="1.6" height="1.6" fill="#fff"/><rect x="19.0" y="8.4" width="1.6" height="1.6" fill="#cfe3f7"/></svg>
<svg class="b" style="left:1247.6px;top:805.6px;" width="22" height="23" viewBox="0 0 22 23"><path d="M8.6 0.4H10.8V3H12.4L9.7 5.8L7 3H8.6Z" fill="#e88a2e"/><rect x="0.4" y="7" width="21" height="15.4" fill="#3f83c8"/><rect x="7" y="7" width="5.6" height="15.4" fill="#e88a2e"/><rect x="1.6" y="9.6" width="3.6" height="2.8" fill="#fff" opacity="0.95"/><rect x="1.6" y="13.9" width="3.6" height="2.8" fill="#fff" opacity="0.95"/><rect x="1.6" y="18.2" width="3.6" height="2.8" fill="#fff" opacity="0.95"/><rect x="6.7" y="9.6" width="3.6" height="2.8" fill="#fff" opacity="0.7"/><rect x="6.7" y="13.9" width="3.6" height="2.8" fill="#fff" opacity="0.7"/><rect x="6.7" y="18.2" width="3.6" height="2.8" fill="#fff" opacity="0.7"/><rect x="11.8" y="9.6" width="3.6" height="2.8" fill="#fff" opacity="0.95"/><rect x="11.8" y="13.9" width="3.6" height="2.8" fill="#fff" opacity="0.95"/><rect x="11.8" y="18.2" width="3.6" height="2.8" fill="#fff" opacity="0.95"/><rect x="16.9" y="9.6" width="3.6" height="2.8" fill="#fff" opacity="0.95"/><rect x="16.9" y="13.9" width="3.6" height="2.8" fill="#fff" opacity="0.95"/><rect x="16.9" y="18.2" width="3.6" height="2.8" fill="#fff" opacity="0.95"/></svg>
<div class="b" style="left:1246px;top:835px;width:27px;height:29px;background:#f2f2f2;border:1.3px solid #a8a8a8;"></div>
<svg class="b" style="left:1248.4px;top:838.4px;" width="23" height="22" viewBox="0 0 23 22"><path d="M1 19V3Q1 1 3 1H19Q21 1 21 3V12" fill="none" stroke="#3f83c8" stroke-width="1.8"/><path d="M1 3.4H21" stroke="#3f83c8" stroke-width="3.2"/><rect x="2" y="5" width="10.6" height="7.6" fill="#8fbde9"/><path d="M1.6 12.8H21M12.8 5V12.8" stroke="#3f83c8" stroke-width="1.1"/><path d="M1 18.4Q1 20.6 3 20.6H11" fill="none" stroke="#3f83c8" stroke-width="1.8"/><path d="M13.6 18.4H21.6M13.6 16.4V20.4M21.6 16.4V20.4" stroke="#3f83c8" stroke-width="1"/></svg>
<svg class="b" style="left:1247.8px;top:882.4px;" width="22" height="21" viewBox="0 0 22 21"><rect x="0.2" y="0.6" width="7.4" height="20" rx="1.6" fill="#3f83c8"/><rect x="10.4" y="13.6" width="11" height="7" rx="1.4" fill="#3f83c8"/><path d="M12.4 4.4Q19.4 4.4 19.8 11.4" fill="none" stroke="#3f83c8" stroke-width="1.9"/><path d="M9.6 4.4L14 1V7.8Z" fill="#3f83c8"/></svg>
<svg class="b" style="left:433px;top:842.4px;" width="21" height="22" viewBox="0 0 21 22"><g transform="translate(0.7,0.7)"><path d="M3.7 14.4C0.6 12.4 -0.4 8 1.4 5.2C3 2.8 5.4 2.2 7.8 2.2V0L12.7 5.25L7.8 10.2V7.9C5.6 7.4 3.6 8.2 2.8 10C2.4 11.2 2.6 13 3.7 14.4Z" fill="#fff" stroke="#4a90d9" stroke-width="1.25" stroke-linejoin="round"/><path d="M3.7 14.4C0.6 12.4 -0.4 8 1.4 5.2C3 2.8 5.4 2.2 7.8 2.2V0L12.7 5.25L7.8 10.2V7.9C5.6 7.4 3.6 8.2 2.8 10C2.4 11.2 2.6 13 3.7 14.4Z" fill="#fff" stroke="#4a90d9" stroke-width="1.25" stroke-linejoin="round" transform="rotate(180 9.64 10.49)"/></g></svg>
<span class="t" style="top:846px;font-size:19.2px;left:458.40px;letter-spacing:-0.033px;color:#747474;">Refresh</span>
<svg class="b" style="left:533.8px;top:852.4px;" width="7" height="5.3" viewBox="0 0 7 5.3"><path d="M0 0H7L3.5 5.3Z" fill="#000"/></svg>
<svg class="b" style="left:551.4px;top:844.4px;" width="3" height="24" viewBox="0 0 3 24"><rect x="0" y="0.00" width="2.6" height="2.4" fill="#b9b1a0"/><rect x="0" y="5.75" width="2.6" height="2.4" fill="#b9b1a0"/><rect x="0" y="11.50" width="2.6" height="2.4" fill="#b9b1a0"/><rect x="0" y="17.25" width="2.6" height="2.4" fill="#b9b1a0"/></svg>
<svg class="b" style="left:562.4px;top:842.8px;" width="23" height="23" viewBox="0 0 23 23"><circle cx="11.2" cy="11.2" r="10.2" fill="#fff" stroke="#a8d5a0" stroke-width="1.5"/><path d="M6.2 11.6L9.8 15.2L16.6 7.6" fill="none" stroke="#a8d5a0" stroke-width="1.6"/></svg>
<span class="t" style="top:846px;font-size:19.2px;left:589.60px;letter-spacing:-0.791px;color:#b6b6b6;">Save</span>
<svg class="b" style="left:639.6px;top:852.4px;" width="7" height="5.3" viewBox="0 0 7 5.3"><path d="M0 0H7L3.5 5.3Z" fill="#000"/></svg>
<svg class="b" style="left:657px;top:844.2px;" width="20" height="20" viewBox="0 0 20 20"><rect x="0.9" y="0.9" width="17.4" height="17.2" rx="2.2" fill="#fff" stroke="#eba79c" stroke-width="1.6"/><path d="M5.8 5.8L13.4 13.4M13.4 5.8L5.8 13.4" stroke="#eba79c" stroke-width="1.5"/></svg>
<span class="t" style="top:846px;font-size:19.2px;left:682.60px;letter-spacing:-0.094px;color:#b6b6b6;">Cancel</span>
<svg class="b" style="left:752px;top:844.4px;" width="3" height="24" viewBox="0 0 3 24"><rect x="0" y="0.00" width="2.6" height="2.4" fill="#b9b1a0"/><rect x="0" y="5.75" width="2.6" height="2.4" fill="#b9b1a0"/><rect x="0" y="11.50" width="2.6" height="2.4" fill="#b9b1a0"/><rect x="0" y="17.25" width="2.6" height="2.4" fill="#b9b1a0"/></svg>
<svg class="b" style="left:763.8px;top:844.4px;" width="22" height="22" viewBox="0 0 22 22"><rect x="0" y="0" width="20.4" height="3.3" fill="#3b86cc"/><rect x="0" y="7.4" width="12.6" height="3.3" fill="#3b86cc"/><rect x="0" y="14.8" width="6.6" height="3.3" fill="#3b86cc"/><path d="M10.4 20.2L11.4 16.6L18.6 9.4L21 11.8L13.8 19Z" fill="#3b86cc"/></svg>
<svg class="b" style="left:795.6px;top:844.4px;" width="23" height="21" viewBox="0 0 23 21"><rect x="0" y="0" width="20.4" height="3.3" fill="#3b86cc"/><rect x="0" y="7.4" width="8.4" height="3.3" fill="#3b86cc"/><rect x="0" y="14.8" width="8.4" height="3.3" fill="#3b86cc"/><path d="M10.6 13H22M16.3 7.2V18.8" stroke="#5aa43c" stroke-width="3"/></svg>
<svg class="b" style="left:828px;top:844.4px;" width="22" height="22" viewBox="0 0 22 22"><rect x="0" y="0" width="20.4" height="3.3" fill="#3b86cc"/><rect x="0" y="7.4" width="7" height="3.3" fill="#3b86cc"/><rect x="0" y="14.8" width="7" height="3.3" fill="#3b86cc"/><path d="M11.4 7.6Q7.6 13.2 11.4 19.4M18.8 7.6Q22.6 13.2 18.8 19.4" fill="none" stroke="#3b86cc" stroke-width="1.2"/><path d="M11.4 13.4H18.8M15.1 9.8V17" stroke="#5aa43c" stroke-width="2"/></svg>
<svg class="b" style="left:860px;top:844.4px;" width="23" height="21" viewBox="0 0 23 21"><rect x="0" y="0" width="20.4" height="3.3" fill="#3b86cc"/><rect x="0" y="7.4" width="8.4" height="3.3" fill="#3b86cc"/><rect x="0" y="14.8" width="8.4" height="3.3" fill="#3b86cc"/><rect x="10" y="11.4" width="12" height="3.4" fill="#cd4528"/></svg>
<svg class="b" style="left:892.6px;top:844.4px;" width="3" height="24" viewBox="0 0 3 24"><rect x="0" y="0.00" width="2.6" height="2.4" fill="#b9b1a0"/><rect x="0" y="5.75" width="2.6" height="2.4" fill="#b9b1a0"/><rect x="0" y="11.50" width="2.6" height="2.4" fill="#b9b1a0"/><rect x="0" y="17.25" width="2.6" height="2.4" fill="#b9b1a0"/></svg>
<svg class="b" style="left:906.6px;top:844.4px;" width="17" height="19" viewBox="0 0 17 19"><rect x="0.4" y="0" width="2.8" height="18" fill="#b9d4ef"/><path d="M14.6 0.6L6.4 9L14.6 17.4" fill="none" stroke="#b9d4ef" stroke-width="2.6"/></svg>
<svg class="b" style="left:940px;top:844.4px;" width="12" height="19" viewBox="0 0 12 19"><path d="M9.8 0.6L1.6 9L9.8 17.4" fill="none" stroke="#b9d4ef" stroke-width="2.6"/></svg>
<svg class="b" style="left:973px;top:844.4px;" width="12" height="19" viewBox="0 0 12 19"><path d="M1.4 0.6L9.6 9L1.4 17.4" fill="none" stroke="#3b86cc" stroke-width="2.6"/></svg>
<svg class="b" style="left:1002.4px;top:844.4px;" width="17" height="19" viewBox="0 0 17 19"><path d="M1.4 0.6L9.6 9L1.4 17.4" fill="none" stroke="#3b86cc" stroke-width="2.6"/><rect x="13" y="0" width="2.8" height="18" fill="#3b86cc"/></svg>
<svg class="b" style="left:1032px;top:843px;" width="23" height="22" viewBox="0 0 23 22"><path d="M1 6V3Q1 1 3 1H6M16 1H19Q21.4 1 21.4 3V6M21.4 16V19Q21.4 21 19 21H16M6 21H3Q1 21 1 19V16" fill="none" stroke="#b9d4ef" stroke-width="1.6"/><path d="M6.4 6.4H13.4L16 9V15.8H6.4Z" fill="#d4e6f7" stroke="#b9d4ef" stroke-width="1.2"/></svg>
<svg class="b" style="left:1070px;top:844.4px;" width="3" height="24" viewBox="0 0 3 24"><rect x="0" y="0.00" width="2.6" height="2.4" fill="#b9b1a0"/><rect x="0" y="5.75" width="2.6" height="2.4" fill="#b9b1a0"/><rect x="0" y="11.50" width="2.6" height="2.4" fill="#b9b1a0"/><rect x="0" y="17.25" width="2.6" height="2.4" fill="#b9b1a0"/></svg>
<svg class="b" style="left:1081.4px;top:843.4px;" width="20" height="22" viewBox="0 0 20 22"><path d="M1.2 14V20.2H18.6V14" fill="none" stroke="#3b86cc" stroke-width="2.2"/><path d="M9.9 0.4L15.4 7H12V16H7.8V7H4.4Z" fill="#3b86cc"/></svg>
<span class="t" style="top:846px;font-size:19.2px;left:1106.80px;letter-spacing:0.255px;color:#747474;">Export data</span>
<svg class="b" style="left:1215.4px;top:852.4px;" width="7" height="5.3" viewBox="0 0 7 5.3"><path d="M0 0H7L3.5 5.3Z" fill="#000"/></svg>
<svg class="b" style="left:429px;top:881px;" width="3" height="24" viewBox="0 0 3 24"><rect x="0" y="0.00" width="2.6" height="2.4" fill="#b9b1a0"/><rect x="0" y="5.75" width="2.6" height="2.4" fill="#b9b1a0"/><rect x="0" y="11.50" width="2.6" height="2.4" fill="#b9b1a0"/><rect x="0" y="17.25" width="2.6" height="2.4" fill="#b9b1a0"/></svg>
<svg class="b" style="left:439.4px;top:879.4px;" width="22" height="22" viewBox="0 0 22 22"><path d="M8.81 0.22L13.19 0.22L13.64 3.30L16.35 4.87L19.24 3.72L21.43 7.50L18.99 9.43L18.99 12.57L21.43 14.50L19.24 18.28L16.35 17.13L13.64 18.70L13.19 21.78L8.81 21.78L8.36 18.70L5.65 17.13L2.76 18.28L0.57 14.50L3.01 12.57L3.01 9.43L0.57 7.50L2.76 3.72L5.65 4.87L8.36 3.30Z" fill="#3f83c8" stroke="#3f83c8" stroke-width="1.6" stroke-linejoin="round"/><circle cx="11.0" cy="11.0" r="4.18" fill="#9cc4ec"/></svg>
<div class="b" style="left:472.4px;top:875.6px;width:98.4px;height:28.4px;background:#fff;border:1px solid #e6e6e6;border-bottom-color:#c4c4c4;"></div>
<span class="t" style="top:881px;font-size:19.2px;left:477.60px;letter-spacing:0.455px;">200</span>
<svg class="b" style="left:581px;top:880px;" width="23" height="21" viewBox="0 0 23 21"><path d="M1.2 14.6V19.6H21.4V14.6" fill="none" stroke="#3b86cc" stroke-width="2"/><path d="M1 1.2H5Q11.2 1.2 11.2 8Q11.2 1.2 17.6 1.2H21.6" fill="none" stroke="#3b86cc" stroke-width="2"/><path d="M11.2 6V12.4" stroke="#3b86cc" stroke-width="2"/><path d="M7.6 9.2L11.2 13L14.8 9.2" fill="none" stroke="#3b86cc" stroke-width="1.8"/></svg>
<span class="t" style="top:882px;font-size:19.2px;left:613.80px;">4</span>
<svg class="b" style="left:635px;top:881px;" width="3" height="24" viewBox="0 0 3 24"><rect x="0" y="0.00" width="2.6" height="2.4" fill="#b9b1a0"/><rect x="0" y="5.75" width="2.6" height="2.4" fill="#b9b1a0"/><rect x="0" y="11.50" width="2.6" height="2.4" fill="#b9b1a0"/><rect x="0" y="17.25" width="2.6" height="2.4" fill="#b9b1a0"/></svg>
<svg class="b" style="left:675.6px;top:888.6px;" width="11" height="2" viewBox="0 0 11 2"><rect x="0" y="0" width="1.7" height="1.6" fill="#2a46a8"/><rect x="4.4" y="0" width="1.7" height="1.6" fill="#2a46a8"/><rect x="8.8" y="0" width="1.7" height="1.6" fill="#2a46a8"/></svg>
<span class="t" style="top:882px;font-size:19.2px;left:704.00px;letter-spacing:0.309px;color:#1a1a1a;">4 row(s) fetched - 0.017s, on 2024-01-17 at 17:15:55</span>
</div>
</body></html>
